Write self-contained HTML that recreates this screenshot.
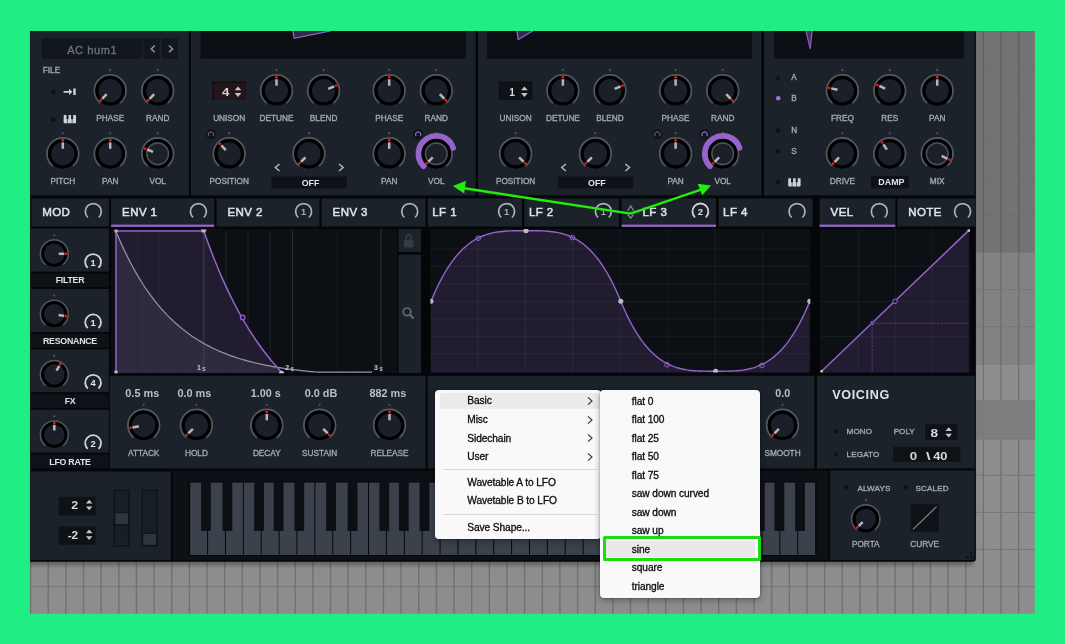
<!DOCTYPE html>
<html><head><meta charset="utf-8"><title>Serum LFO shape menu</title>
<style>
html,body{margin:0;padding:0;background:#1fee83;}
body{width:1065px;height:644px;position:relative;overflow:hidden;font-family:"Liberation Sans",sans-serif;}
svg.main{position:absolute;left:0;top:0;will-change:transform;}
svg.main text{font-family:"Liberation Sans",sans-serif;}
.menu{position:absolute;background:#f9f9f9;border-radius:4px;box-shadow:0 2px 6px rgba(0,0,0,.35),0 0 0 0.5px rgba(0,0,0,.18);box-sizing:border-box;}
.hl{position:absolute;background:#ebebeb;border-radius:2px;}
.mi{position:absolute;font-size:10.2px;line-height:16px;height:16px;color:#0c0c0c;white-space:nowrap;letter-spacing:-0.1px;margin-top:0.4px;-webkit-text-stroke:0.3px #0c0c0c;}
.ar{position:absolute;}
.sep{position:absolute;height:1px;background:#d9d9d9;}
.sine{position:absolute;box-sizing:border-box;border:3px solid #1bdc14;border-radius:1.6px;}
</style></head><body>
<svg class="main" width="1065" height="644" viewBox="0 0 1065 644">
<defs><filter id="bl" x="-5%" y="-5%" width="110%" height="110%"><feGaussianBlur stdDeviation="2"/></filter></defs>
<rect x="0.00" y="0.00" width="1065.00" height="644.00" fill="#1fee83" />
<rect x="30.30" y="31.00" width="1004.50" height="582.70" fill="#8d8d8d" />
<rect x="30.30" y="31.00" width="1004.50" height="221.00" fill="#737373" />
<rect x="30.30" y="252.00" width="1004.50" height="110.80" fill="#828282" />
<rect x="30.30" y="362.80" width="1004.50" height="37.20" fill="#8d8d8d" />
<line x1="983.40" y1="31" x2="983.40" y2="252" stroke="#5f5f5f" stroke-width="1.3"/>
<line x1="983.40" y1="252" x2="983.40" y2="362.8" stroke="#6b6b6b" stroke-width="1.3"/>
<line x1="983.40" y1="362.8" x2="983.40" y2="613.7" stroke="#717171" stroke-width="1.4"/>
<line x1="965.75" y1="31" x2="965.75" y2="252" stroke="#5f5f5f" stroke-width="1.3"/>
<line x1="965.75" y1="252" x2="965.75" y2="362.8" stroke="#6b6b6b" stroke-width="1.3"/>
<line x1="965.75" y1="362.8" x2="965.75" y2="613.7" stroke="#717171" stroke-width="1.4"/>
<line x1="948.11" y1="31" x2="948.11" y2="252" stroke="#5f5f5f" stroke-width="1.3"/>
<line x1="948.11" y1="252" x2="948.11" y2="362.8" stroke="#6b6b6b" stroke-width="1.3"/>
<line x1="948.11" y1="362.8" x2="948.11" y2="613.7" stroke="#717171" stroke-width="1.4"/>
<line x1="930.47" y1="31" x2="930.47" y2="252" stroke="#5f5f5f" stroke-width="1.3"/>
<line x1="930.47" y1="252" x2="930.47" y2="362.8" stroke="#6b6b6b" stroke-width="1.3"/>
<line x1="930.47" y1="362.8" x2="930.47" y2="613.7" stroke="#717171" stroke-width="1.4"/>
<line x1="912.82" y1="31" x2="912.82" y2="252" stroke="#5f5f5f" stroke-width="1.3"/>
<line x1="912.82" y1="252" x2="912.82" y2="362.8" stroke="#6b6b6b" stroke-width="1.3"/>
<line x1="912.82" y1="362.8" x2="912.82" y2="613.7" stroke="#717171" stroke-width="1.4"/>
<line x1="895.18" y1="31" x2="895.18" y2="252" stroke="#5f5f5f" stroke-width="1.3"/>
<line x1="895.18" y1="252" x2="895.18" y2="362.8" stroke="#6b6b6b" stroke-width="1.3"/>
<line x1="895.18" y1="362.8" x2="895.18" y2="613.7" stroke="#717171" stroke-width="1.4"/>
<line x1="877.53" y1="31" x2="877.53" y2="252" stroke="#5f5f5f" stroke-width="1.3"/>
<line x1="877.53" y1="252" x2="877.53" y2="362.8" stroke="#6b6b6b" stroke-width="1.3"/>
<line x1="877.53" y1="362.8" x2="877.53" y2="613.7" stroke="#717171" stroke-width="1.4"/>
<line x1="859.89" y1="31" x2="859.89" y2="252" stroke="#5f5f5f" stroke-width="1.3"/>
<line x1="859.89" y1="252" x2="859.89" y2="362.8" stroke="#6b6b6b" stroke-width="1.3"/>
<line x1="859.89" y1="362.8" x2="859.89" y2="613.7" stroke="#717171" stroke-width="1.4"/>
<line x1="842.24" y1="31" x2="842.24" y2="252" stroke="#5f5f5f" stroke-width="1.3"/>
<line x1="842.24" y1="252" x2="842.24" y2="362.8" stroke="#6b6b6b" stroke-width="1.3"/>
<line x1="842.24" y1="362.8" x2="842.24" y2="613.7" stroke="#717171" stroke-width="1.4"/>
<line x1="824.60" y1="31" x2="824.60" y2="252" stroke="#5f5f5f" stroke-width="1.3"/>
<line x1="824.60" y1="252" x2="824.60" y2="362.8" stroke="#6b6b6b" stroke-width="1.3"/>
<line x1="824.60" y1="362.8" x2="824.60" y2="613.7" stroke="#717171" stroke-width="1.4"/>
<line x1="806.95" y1="31" x2="806.95" y2="252" stroke="#5f5f5f" stroke-width="1.3"/>
<line x1="806.95" y1="252" x2="806.95" y2="362.8" stroke="#6b6b6b" stroke-width="1.3"/>
<line x1="806.95" y1="362.8" x2="806.95" y2="613.7" stroke="#717171" stroke-width="1.4"/>
<line x1="789.31" y1="31" x2="789.31" y2="252" stroke="#5f5f5f" stroke-width="1.3"/>
<line x1="789.31" y1="252" x2="789.31" y2="362.8" stroke="#6b6b6b" stroke-width="1.3"/>
<line x1="789.31" y1="362.8" x2="789.31" y2="613.7" stroke="#717171" stroke-width="1.4"/>
<line x1="771.66" y1="31" x2="771.66" y2="252" stroke="#5f5f5f" stroke-width="1.3"/>
<line x1="771.66" y1="252" x2="771.66" y2="362.8" stroke="#6b6b6b" stroke-width="1.3"/>
<line x1="771.66" y1="362.8" x2="771.66" y2="613.7" stroke="#717171" stroke-width="1.4"/>
<line x1="754.02" y1="31" x2="754.02" y2="252" stroke="#5f5f5f" stroke-width="1.3"/>
<line x1="754.02" y1="252" x2="754.02" y2="362.8" stroke="#6b6b6b" stroke-width="1.3"/>
<line x1="754.02" y1="362.8" x2="754.02" y2="613.7" stroke="#717171" stroke-width="1.4"/>
<line x1="736.37" y1="31" x2="736.37" y2="252" stroke="#5f5f5f" stroke-width="1.3"/>
<line x1="736.37" y1="252" x2="736.37" y2="362.8" stroke="#6b6b6b" stroke-width="1.3"/>
<line x1="736.37" y1="362.8" x2="736.37" y2="613.7" stroke="#717171" stroke-width="1.4"/>
<line x1="718.73" y1="31" x2="718.73" y2="252" stroke="#5f5f5f" stroke-width="1.3"/>
<line x1="718.73" y1="252" x2="718.73" y2="362.8" stroke="#6b6b6b" stroke-width="1.3"/>
<line x1="718.73" y1="362.8" x2="718.73" y2="613.7" stroke="#717171" stroke-width="1.4"/>
<line x1="701.08" y1="31" x2="701.08" y2="252" stroke="#5f5f5f" stroke-width="1.3"/>
<line x1="701.08" y1="252" x2="701.08" y2="362.8" stroke="#6b6b6b" stroke-width="1.3"/>
<line x1="701.08" y1="362.8" x2="701.08" y2="613.7" stroke="#717171" stroke-width="1.4"/>
<line x1="683.44" y1="31" x2="683.44" y2="252" stroke="#5f5f5f" stroke-width="1.3"/>
<line x1="683.44" y1="252" x2="683.44" y2="362.8" stroke="#6b6b6b" stroke-width="1.3"/>
<line x1="683.44" y1="362.8" x2="683.44" y2="613.7" stroke="#717171" stroke-width="1.4"/>
<line x1="665.79" y1="31" x2="665.79" y2="252" stroke="#5f5f5f" stroke-width="1.3"/>
<line x1="665.79" y1="252" x2="665.79" y2="362.8" stroke="#6b6b6b" stroke-width="1.3"/>
<line x1="665.79" y1="362.8" x2="665.79" y2="613.7" stroke="#717171" stroke-width="1.4"/>
<line x1="648.15" y1="31" x2="648.15" y2="252" stroke="#5f5f5f" stroke-width="1.3"/>
<line x1="648.15" y1="252" x2="648.15" y2="362.8" stroke="#6b6b6b" stroke-width="1.3"/>
<line x1="648.15" y1="362.8" x2="648.15" y2="613.7" stroke="#717171" stroke-width="1.4"/>
<line x1="630.50" y1="31" x2="630.50" y2="252" stroke="#5f5f5f" stroke-width="1.3"/>
<line x1="630.50" y1="252" x2="630.50" y2="362.8" stroke="#6b6b6b" stroke-width="1.3"/>
<line x1="630.50" y1="362.8" x2="630.50" y2="613.7" stroke="#717171" stroke-width="1.4"/>
<line x1="612.86" y1="31" x2="612.86" y2="252" stroke="#5f5f5f" stroke-width="1.3"/>
<line x1="612.86" y1="252" x2="612.86" y2="362.8" stroke="#6b6b6b" stroke-width="1.3"/>
<line x1="612.86" y1="362.8" x2="612.86" y2="613.7" stroke="#717171" stroke-width="1.4"/>
<line x1="595.21" y1="31" x2="595.21" y2="252" stroke="#5f5f5f" stroke-width="1.3"/>
<line x1="595.21" y1="252" x2="595.21" y2="362.8" stroke="#6b6b6b" stroke-width="1.3"/>
<line x1="595.21" y1="362.8" x2="595.21" y2="613.7" stroke="#717171" stroke-width="1.4"/>
<line x1="577.57" y1="31" x2="577.57" y2="252" stroke="#5f5f5f" stroke-width="1.3"/>
<line x1="577.57" y1="252" x2="577.57" y2="362.8" stroke="#6b6b6b" stroke-width="1.3"/>
<line x1="577.57" y1="362.8" x2="577.57" y2="613.7" stroke="#717171" stroke-width="1.4"/>
<line x1="559.92" y1="31" x2="559.92" y2="252" stroke="#5f5f5f" stroke-width="1.3"/>
<line x1="559.92" y1="252" x2="559.92" y2="362.8" stroke="#6b6b6b" stroke-width="1.3"/>
<line x1="559.92" y1="362.8" x2="559.92" y2="613.7" stroke="#717171" stroke-width="1.4"/>
<line x1="542.28" y1="31" x2="542.28" y2="252" stroke="#5f5f5f" stroke-width="1.3"/>
<line x1="542.28" y1="252" x2="542.28" y2="362.8" stroke="#6b6b6b" stroke-width="1.3"/>
<line x1="542.28" y1="362.8" x2="542.28" y2="613.7" stroke="#717171" stroke-width="1.4"/>
<line x1="524.63" y1="31" x2="524.63" y2="252" stroke="#5f5f5f" stroke-width="1.3"/>
<line x1="524.63" y1="252" x2="524.63" y2="362.8" stroke="#6b6b6b" stroke-width="1.3"/>
<line x1="524.63" y1="362.8" x2="524.63" y2="613.7" stroke="#717171" stroke-width="1.4"/>
<line x1="506.99" y1="31" x2="506.99" y2="252" stroke="#5f5f5f" stroke-width="1.3"/>
<line x1="506.99" y1="252" x2="506.99" y2="362.8" stroke="#6b6b6b" stroke-width="1.3"/>
<line x1="506.99" y1="362.8" x2="506.99" y2="613.7" stroke="#717171" stroke-width="1.4"/>
<line x1="489.34" y1="31" x2="489.34" y2="252" stroke="#5f5f5f" stroke-width="1.3"/>
<line x1="489.34" y1="252" x2="489.34" y2="362.8" stroke="#6b6b6b" stroke-width="1.3"/>
<line x1="489.34" y1="362.8" x2="489.34" y2="613.7" stroke="#717171" stroke-width="1.4"/>
<line x1="471.70" y1="31" x2="471.70" y2="252" stroke="#5f5f5f" stroke-width="1.3"/>
<line x1="471.70" y1="252" x2="471.70" y2="362.8" stroke="#6b6b6b" stroke-width="1.3"/>
<line x1="471.70" y1="362.8" x2="471.70" y2="613.7" stroke="#717171" stroke-width="1.4"/>
<line x1="454.05" y1="31" x2="454.05" y2="252" stroke="#5f5f5f" stroke-width="1.3"/>
<line x1="454.05" y1="252" x2="454.05" y2="362.8" stroke="#6b6b6b" stroke-width="1.3"/>
<line x1="454.05" y1="362.8" x2="454.05" y2="613.7" stroke="#717171" stroke-width="1.4"/>
<line x1="436.41" y1="31" x2="436.41" y2="252" stroke="#5f5f5f" stroke-width="1.3"/>
<line x1="436.41" y1="252" x2="436.41" y2="362.8" stroke="#6b6b6b" stroke-width="1.3"/>
<line x1="436.41" y1="362.8" x2="436.41" y2="613.7" stroke="#717171" stroke-width="1.4"/>
<line x1="418.76" y1="31" x2="418.76" y2="252" stroke="#5f5f5f" stroke-width="1.3"/>
<line x1="418.76" y1="252" x2="418.76" y2="362.8" stroke="#6b6b6b" stroke-width="1.3"/>
<line x1="418.76" y1="362.8" x2="418.76" y2="613.7" stroke="#717171" stroke-width="1.4"/>
<line x1="401.12" y1="31" x2="401.12" y2="252" stroke="#5f5f5f" stroke-width="1.3"/>
<line x1="401.12" y1="252" x2="401.12" y2="362.8" stroke="#6b6b6b" stroke-width="1.3"/>
<line x1="401.12" y1="362.8" x2="401.12" y2="613.7" stroke="#717171" stroke-width="1.4"/>
<line x1="383.47" y1="31" x2="383.47" y2="252" stroke="#5f5f5f" stroke-width="1.3"/>
<line x1="383.47" y1="252" x2="383.47" y2="362.8" stroke="#6b6b6b" stroke-width="1.3"/>
<line x1="383.47" y1="362.8" x2="383.47" y2="613.7" stroke="#717171" stroke-width="1.4"/>
<line x1="365.83" y1="31" x2="365.83" y2="252" stroke="#5f5f5f" stroke-width="1.3"/>
<line x1="365.83" y1="252" x2="365.83" y2="362.8" stroke="#6b6b6b" stroke-width="1.3"/>
<line x1="365.83" y1="362.8" x2="365.83" y2="613.7" stroke="#717171" stroke-width="1.4"/>
<line x1="348.18" y1="31" x2="348.18" y2="252" stroke="#5f5f5f" stroke-width="1.3"/>
<line x1="348.18" y1="252" x2="348.18" y2="362.8" stroke="#6b6b6b" stroke-width="1.3"/>
<line x1="348.18" y1="362.8" x2="348.18" y2="613.7" stroke="#717171" stroke-width="1.4"/>
<line x1="330.54" y1="31" x2="330.54" y2="252" stroke="#5f5f5f" stroke-width="1.3"/>
<line x1="330.54" y1="252" x2="330.54" y2="362.8" stroke="#6b6b6b" stroke-width="1.3"/>
<line x1="330.54" y1="362.8" x2="330.54" y2="613.7" stroke="#717171" stroke-width="1.4"/>
<line x1="312.89" y1="31" x2="312.89" y2="252" stroke="#5f5f5f" stroke-width="1.3"/>
<line x1="312.89" y1="252" x2="312.89" y2="362.8" stroke="#6b6b6b" stroke-width="1.3"/>
<line x1="312.89" y1="362.8" x2="312.89" y2="613.7" stroke="#717171" stroke-width="1.4"/>
<line x1="295.25" y1="31" x2="295.25" y2="252" stroke="#5f5f5f" stroke-width="1.3"/>
<line x1="295.25" y1="252" x2="295.25" y2="362.8" stroke="#6b6b6b" stroke-width="1.3"/>
<line x1="295.25" y1="362.8" x2="295.25" y2="613.7" stroke="#717171" stroke-width="1.4"/>
<line x1="277.60" y1="31" x2="277.60" y2="252" stroke="#5f5f5f" stroke-width="1.3"/>
<line x1="277.60" y1="252" x2="277.60" y2="362.8" stroke="#6b6b6b" stroke-width="1.3"/>
<line x1="277.60" y1="362.8" x2="277.60" y2="613.7" stroke="#717171" stroke-width="1.4"/>
<line x1="259.96" y1="31" x2="259.96" y2="252" stroke="#5f5f5f" stroke-width="1.3"/>
<line x1="259.96" y1="252" x2="259.96" y2="362.8" stroke="#6b6b6b" stroke-width="1.3"/>
<line x1="259.96" y1="362.8" x2="259.96" y2="613.7" stroke="#717171" stroke-width="1.4"/>
<line x1="242.31" y1="31" x2="242.31" y2="252" stroke="#5f5f5f" stroke-width="1.3"/>
<line x1="242.31" y1="252" x2="242.31" y2="362.8" stroke="#6b6b6b" stroke-width="1.3"/>
<line x1="242.31" y1="362.8" x2="242.31" y2="613.7" stroke="#717171" stroke-width="1.4"/>
<line x1="224.67" y1="31" x2="224.67" y2="252" stroke="#5f5f5f" stroke-width="1.3"/>
<line x1="224.67" y1="252" x2="224.67" y2="362.8" stroke="#6b6b6b" stroke-width="1.3"/>
<line x1="224.67" y1="362.8" x2="224.67" y2="613.7" stroke="#717171" stroke-width="1.4"/>
<line x1="207.02" y1="31" x2="207.02" y2="252" stroke="#5f5f5f" stroke-width="1.3"/>
<line x1="207.02" y1="252" x2="207.02" y2="362.8" stroke="#6b6b6b" stroke-width="1.3"/>
<line x1="207.02" y1="362.8" x2="207.02" y2="613.7" stroke="#717171" stroke-width="1.4"/>
<line x1="189.38" y1="31" x2="189.38" y2="252" stroke="#5f5f5f" stroke-width="1.3"/>
<line x1="189.38" y1="252" x2="189.38" y2="362.8" stroke="#6b6b6b" stroke-width="1.3"/>
<line x1="189.38" y1="362.8" x2="189.38" y2="613.7" stroke="#717171" stroke-width="1.4"/>
<line x1="171.73" y1="31" x2="171.73" y2="252" stroke="#5f5f5f" stroke-width="1.3"/>
<line x1="171.73" y1="252" x2="171.73" y2="362.8" stroke="#6b6b6b" stroke-width="1.3"/>
<line x1="171.73" y1="362.8" x2="171.73" y2="613.7" stroke="#717171" stroke-width="1.4"/>
<line x1="154.09" y1="31" x2="154.09" y2="252" stroke="#5f5f5f" stroke-width="1.3"/>
<line x1="154.09" y1="252" x2="154.09" y2="362.8" stroke="#6b6b6b" stroke-width="1.3"/>
<line x1="154.09" y1="362.8" x2="154.09" y2="613.7" stroke="#717171" stroke-width="1.4"/>
<line x1="136.44" y1="31" x2="136.44" y2="252" stroke="#5f5f5f" stroke-width="1.3"/>
<line x1="136.44" y1="252" x2="136.44" y2="362.8" stroke="#6b6b6b" stroke-width="1.3"/>
<line x1="136.44" y1="362.8" x2="136.44" y2="613.7" stroke="#717171" stroke-width="1.4"/>
<line x1="118.80" y1="31" x2="118.80" y2="252" stroke="#5f5f5f" stroke-width="1.3"/>
<line x1="118.80" y1="252" x2="118.80" y2="362.8" stroke="#6b6b6b" stroke-width="1.3"/>
<line x1="118.80" y1="362.8" x2="118.80" y2="613.7" stroke="#717171" stroke-width="1.4"/>
<line x1="101.15" y1="31" x2="101.15" y2="252" stroke="#5f5f5f" stroke-width="1.3"/>
<line x1="101.15" y1="252" x2="101.15" y2="362.8" stroke="#6b6b6b" stroke-width="1.3"/>
<line x1="101.15" y1="362.8" x2="101.15" y2="613.7" stroke="#717171" stroke-width="1.4"/>
<line x1="83.51" y1="31" x2="83.51" y2="252" stroke="#5f5f5f" stroke-width="1.3"/>
<line x1="83.51" y1="252" x2="83.51" y2="362.8" stroke="#6b6b6b" stroke-width="1.3"/>
<line x1="83.51" y1="362.8" x2="83.51" y2="613.7" stroke="#717171" stroke-width="1.4"/>
<line x1="65.86" y1="31" x2="65.86" y2="252" stroke="#5f5f5f" stroke-width="1.3"/>
<line x1="65.86" y1="252" x2="65.86" y2="362.8" stroke="#6b6b6b" stroke-width="1.3"/>
<line x1="65.86" y1="362.8" x2="65.86" y2="613.7" stroke="#717171" stroke-width="1.4"/>
<line x1="48.22" y1="31" x2="48.22" y2="252" stroke="#5f5f5f" stroke-width="1.3"/>
<line x1="48.22" y1="252" x2="48.22" y2="362.8" stroke="#6b6b6b" stroke-width="1.3"/>
<line x1="48.22" y1="362.8" x2="48.22" y2="613.7" stroke="#717171" stroke-width="1.4"/>
<line x1="30.57" y1="31" x2="30.57" y2="252" stroke="#5f5f5f" stroke-width="1.3"/>
<line x1="30.57" y1="252" x2="30.57" y2="362.8" stroke="#6b6b6b" stroke-width="1.3"/>
<line x1="30.57" y1="362.8" x2="30.57" y2="613.7" stroke="#717171" stroke-width="1.4"/>
<line x1="1001.04" y1="31" x2="1001.04" y2="252" stroke="#5f5f5f" stroke-width="1.3"/>
<line x1="1001.04" y1="252" x2="1001.04" y2="362.8" stroke="#6b6b6b" stroke-width="1.3"/>
<line x1="1001.04" y1="362.8" x2="1001.04" y2="613.7" stroke="#717171" stroke-width="1.4"/>
<line x1="1018.69" y1="31" x2="1018.69" y2="252" stroke="#5f5f5f" stroke-width="1.3"/>
<line x1="1018.69" y1="252" x2="1018.69" y2="362.8" stroke="#6b6b6b" stroke-width="1.3"/>
<line x1="1018.69" y1="362.8" x2="1018.69" y2="613.7" stroke="#717171" stroke-width="1.4"/>
<line x1="30.3" y1="66.60" x2="1034.8" y2="66.60" stroke="#6b6b6b" stroke-width="1" stroke-dasharray="1.5 1.5"/>
<line x1="30.3" y1="103.75" x2="1034.8" y2="103.75" stroke="#6b6b6b" stroke-width="1" stroke-dasharray="1.5 1.5"/>
<line x1="30.3" y1="140.90" x2="1034.8" y2="140.90" stroke="#6b6b6b" stroke-width="1" stroke-dasharray="1.5 1.5"/>
<line x1="30.3" y1="178.05" x2="1034.8" y2="178.05" stroke="#6b6b6b" stroke-width="1" stroke-dasharray="1.5 1.5"/>
<line x1="30.3" y1="215.20" x2="1034.8" y2="215.20" stroke="#6b6b6b" stroke-width="1" stroke-dasharray="1.5 1.5"/>
<line x1="30.3" y1="252.35" x2="1034.8" y2="252.35" stroke="#767676" stroke-width="1" />
<line x1="30.3" y1="289.50" x2="1034.8" y2="289.50" stroke="#767676" stroke-width="1" />
<line x1="30.3" y1="326.65" x2="1034.8" y2="326.65" stroke="#767676" stroke-width="1" />
<line x1="30.3" y1="363.80" x2="1034.8" y2="363.80" stroke="#767676" stroke-width="1" />
<line x1="30.3" y1="400.95" x2="1034.8" y2="400.95" stroke="#767676" stroke-width="1" />
<line x1="30.3" y1="438.10" x2="1034.8" y2="438.10" stroke="#767676" stroke-width="1" />
<line x1="30.3" y1="475.25" x2="1034.8" y2="475.25" stroke="#767676" stroke-width="1" />
<line x1="30.3" y1="512.40" x2="1034.8" y2="512.40" stroke="#767676" stroke-width="1" />
<line x1="30.3" y1="549.55" x2="1034.8" y2="549.55" stroke="#767676" stroke-width="1" />
<line x1="30.3" y1="586.70" x2="1034.8" y2="586.70" stroke="#767676" stroke-width="1" />
<pattern id="dots" width="2" height="2" patternUnits="userSpaceOnUse"><rect width="2" height="2" fill="#7c7c7c"/><rect width="1" height="1" fill="#868686"/></pattern>
<rect x="30.30" y="400.00" width="1004.50" height="39.60" fill="#7c7c7c" />
<rect x="983.40" y="402.00" width="49.90" height="36.00" fill="url(#dots)" />
<clipPath id="gc"><rect x="30.3" y="31" width="1004.5" height="582.7"/></clipPath>
<g clip-path="url(#gc)"><rect x="24.3" y="33" width="949.1" height="532.3" fill="#000" opacity="0.3" filter="url(#bl)"/></g>
<path d="M30.3,31H975.9V558.5999999999999a3.2,3.2 0 0 1 -3.2,3.2H30.3Z" fill="#040608"/>
<rect x="30.60" y="31.00" width="158.30" height="164.40" fill="#1c222a" />
<rect x="190.90" y="31.00" width="284.70" height="164.40" fill="#1c222a" />
<rect x="478.00" y="31.00" width="283.50" height="164.40" fill="#1c222a" />
<rect x="764.00" y="31.00" width="210.80" height="164.40" fill="#1c222a" />
<rect x="41.80" y="38.00" width="100.40" height="21.00" fill="#12171e" />
<text x="92.20" y="53.54" font-size="11" fill="#6f757d" text-anchor="middle" font-weight="normal"  stroke="#6f757d" stroke-width="0.3" letter-spacing="0.6">AC hum1</text>
<rect x="143.60" y="38.00" width="16.10" height="21.00" fill="#12171e" />
<rect x="161.50" y="38.00" width="16.30" height="21.00" fill="#12171e" />
<path d="M154.80,45.5L151.20,48.9L154.80,52.3" fill="none" stroke="#8d939a" stroke-width="1.5"/>
<path d="M169.00,45.5L172.60,48.9L169.00,52.3" fill="none" stroke="#8d939a" stroke-width="1.5"/>
<text x="42.80" y="72.64" font-size="8.2" fill="#a4a9b0" text-anchor="start" font-weight="normal" stroke="#a4a9b0" stroke-width="0.33" >FILE</text>
<circle cx="53.4" cy="91.9" r="2.3" fill="#0e1216"/>
<circle cx="53.4" cy="119.8" r="2.3" fill="#0e1216"/>
<path d="M63.6,90.9h5.4v-2.2l3.4,3.1l-3.4,3.1v-2.2h-5.4z M73.3,88.6h2.4v6.4h-2.4z" fill="#d0d4d9"/>
<rect x="63.65" y="115.00" width="12.4" height="8.2" rx="0.8" fill="#d0d4d9"/>
<rect x="66.45" y="114.80" width="2.1" height="4.3" fill="#1c222a"/>
<rect x="67.20" y="119.00" width="0.6" height="4.4" fill="#1c222a"/>
<rect x="71.05" y="114.80" width="2.1" height="4.3" fill="#1c222a"/>
<rect x="71.80" y="119.00" width="0.6" height="4.4" fill="#1c222a"/>
<circle cx="110.2" cy="70.10" r="1.05" fill="#525860"/>
<path d="M100.29,102.94A15.75,15.75 0 1 1 120.11,102.94" fill="none" stroke="#525860" stroke-width="1.90"/>
<circle cx="110.2" cy="90.7" r="13.25" fill="#1b2028" stroke="#000" stroke-width="3.30"/>
<line x1="106.66" y1="94.24" x2="102.14" y2="98.76" stroke="#b4b8be" stroke-width="2.5"/>
<circle cx="100.65" cy="100.25" r="1.4" fill="#f01418"/>
<circle cx="157.7" cy="70.10" r="1.05" fill="#525860"/>
<path d="M147.79,102.94A15.75,15.75 0 1 1 167.61,102.94" fill="none" stroke="#525860" stroke-width="1.90"/>
<circle cx="157.7" cy="90.7" r="13.25" fill="#1b2028" stroke="#000" stroke-width="3.30"/>
<line x1="154.16" y1="94.24" x2="149.64" y2="98.76" stroke="#b4b8be" stroke-width="2.5"/>
<circle cx="148.15" cy="100.25" r="1.4" fill="#f01418"/>
<text x="110.20" y="121.15" font-size="8.25" fill="#a4a9b0" text-anchor="middle" font-weight="normal" stroke="#a4a9b0" stroke-width="0.33" >PHASE</text>
<text x="157.70" y="121.15" font-size="8.25" fill="#a4a9b0" text-anchor="middle" font-weight="normal" stroke="#a4a9b0" stroke-width="0.33" >RAND</text>
<circle cx="62.8" cy="133.20" r="1.05" fill="#525860"/>
<path d="M52.89,166.04A15.75,15.75 0 1 1 72.71,166.04" fill="none" stroke="#525860" stroke-width="1.90"/>
<circle cx="62.8" cy="153.8" r="13.25" fill="#1b2028" stroke="#000" stroke-width="3.30"/>
<line x1="62.80" y1="148.80" x2="62.80" y2="142.40" stroke="#b4b8be" stroke-width="2.5"/>
<circle cx="62.80" cy="140.30" r="1.4" fill="#f01418"/>
<circle cx="110.2" cy="133.20" r="1.05" fill="#525860"/>
<path d="M100.29,166.04A15.75,15.75 0 1 1 120.11,166.04" fill="none" stroke="#525860" stroke-width="1.90"/>
<circle cx="110.2" cy="153.8" r="13.25" fill="#1b2028" stroke="#000" stroke-width="3.30"/>
<line x1="110.20" y1="148.80" x2="110.20" y2="142.40" stroke="#b4b8be" stroke-width="2.5"/>
<circle cx="110.20" cy="140.30" r="1.4" fill="#f01418"/>
<circle cx="157.7" cy="133.20" r="1.05" fill="#525860"/>
<path d="M147.79,166.04A15.75,15.75 0 1 1 167.61,166.04" fill="none" stroke="#525860" stroke-width="1.90"/>
<circle cx="157.7" cy="153.8" r="13.25" fill="#1b2028" stroke="#000" stroke-width="3.30"/>
<circle cx="157.7" cy="153.8" r="10.80" fill="none" stroke="#4c525a" stroke-width="1.4"/>
<line x1="153.06" y1="151.93" x2="147.13" y2="149.53" stroke="#b4b8be" stroke-width="2.5"/>
<circle cx="145.18" cy="148.74" r="1.4" fill="#f01418"/>
<text x="62.80" y="184.45" font-size="8.25" fill="#a4a9b0" text-anchor="middle" font-weight="normal" stroke="#a4a9b0" stroke-width="0.33" >PITCH</text>
<text x="110.20" y="184.45" font-size="8.25" fill="#a4a9b0" text-anchor="middle" font-weight="normal" stroke="#a4a9b0" stroke-width="0.33" >PAN</text>
<text x="157.70" y="184.45" font-size="8.25" fill="#a4a9b0" text-anchor="middle" font-weight="normal" stroke="#a4a9b0" stroke-width="0.33" >VOL</text>
<rect x="200.50" y="31.00" width="265.30" height="27.80" fill="#0c1014" />
<rect x="212.30" y="81.50" width="33.50" height="18.40" fill="#0a0d11" />
<rect x="213.60" y="82.60" width="32.20" height="17.30" fill="#24151a" />
<text x="222.10" y="95.85" font-size="11.3" fill="#d6d2d2" font-weight="bold" textLength="7.4" lengthAdjust="spacingAndGlyphs">4</text>
<path d="M234.7,90.2L238,86.5L241.3,90.2Z M234.7,93.10000000000001L238,96.9L241.3,93.10000000000001Z" fill="#c4c8cd"/>
<text x="229.20" y="121.15" font-size="8.25" fill="#a4a9b0" text-anchor="middle" font-weight="normal" stroke="#a4a9b0" stroke-width="0.33" >UNISON</text>
<circle cx="276.5" cy="70.10" r="1.05" fill="#525860"/>
<path d="M266.59,102.94A15.75,15.75 0 1 1 286.41,102.94" fill="none" stroke="#525860" stroke-width="1.90"/>
<circle cx="276.5" cy="90.7" r="13.25" fill="#1b2028" stroke="#000" stroke-width="3.30"/>
<line x1="276.50" y1="85.70" x2="276.50" y2="79.30" stroke="#b4b8be" stroke-width="2.5"/>
<circle cx="276.50" cy="77.20" r="1.4" fill="#f01418"/>
<text x="276.50" y="121.15" font-size="8.25" fill="#a4a9b0" text-anchor="middle" font-weight="normal" stroke="#a4a9b0" stroke-width="0.33" >DETUNE</text>
<circle cx="323.6" cy="70.10" r="1.05" fill="#525860"/>
<path d="M313.69,102.94A15.75,15.75 0 1 1 333.51,102.94" fill="none" stroke="#525860" stroke-width="1.90"/>
<circle cx="323.6" cy="90.7" r="13.25" fill="#1b2028" stroke="#000" stroke-width="3.30"/>
<line x1="328.24" y1="88.83" x2="334.17" y2="86.43" stroke="#b4b8be" stroke-width="2.5"/>
<circle cx="336.12" cy="85.64" r="1.4" fill="#f01418"/>
<text x="323.60" y="121.15" font-size="8.25" fill="#a4a9b0" text-anchor="middle" font-weight="normal" stroke="#a4a9b0" stroke-width="0.33" >BLEND</text>
<circle cx="389.2" cy="70.10" r="1.05" fill="#525860"/>
<path d="M379.29,102.94A15.75,15.75 0 1 1 399.11,102.94" fill="none" stroke="#525860" stroke-width="1.90"/>
<circle cx="389.2" cy="90.7" r="13.25" fill="#1b2028" stroke="#000" stroke-width="3.30"/>
<line x1="389.20" y1="85.70" x2="389.20" y2="79.30" stroke="#b4b8be" stroke-width="2.5"/>
<circle cx="389.20" cy="77.20" r="1.4" fill="#f01418"/>
<text x="389.20" y="121.15" font-size="8.25" fill="#a4a9b0" text-anchor="middle" font-weight="normal" stroke="#a4a9b0" stroke-width="0.33" >PHASE</text>
<circle cx="436.3" cy="70.10" r="1.05" fill="#525860"/>
<path d="M426.39,102.94A15.75,15.75 0 1 1 446.21,102.94" fill="none" stroke="#525860" stroke-width="1.90"/>
<circle cx="436.3" cy="90.7" r="13.25" fill="#1b2028" stroke="#000" stroke-width="3.30"/>
<line x1="439.84" y1="94.24" x2="444.36" y2="98.76" stroke="#b4b8be" stroke-width="2.5"/>
<circle cx="445.85" cy="100.25" r="1.4" fill="#f01418"/>
<text x="436.30" y="121.15" font-size="8.25" fill="#a4a9b0" text-anchor="middle" font-weight="normal" stroke="#a4a9b0" stroke-width="0.33" >RAND</text>
<circle cx="229.2" cy="133.15" r="1.05" fill="#525860"/>
<path d="M219.29,165.99A15.75,15.75 0 1 1 239.11,165.99" fill="none" stroke="#525860" stroke-width="1.90"/>
<circle cx="229.2" cy="153.75" r="13.25" fill="#1b2028" stroke="#000" stroke-width="3.30"/>
<line x1="225.79" y1="150.09" x2="221.43" y2="145.41" stroke="#b4b8be" stroke-width="2.5"/>
<circle cx="219.99" cy="143.88" r="1.4" fill="#f01418"/>
<text x="229.20" y="184.45" font-size="8.25" fill="#a4a9b0" text-anchor="middle" font-weight="normal" stroke="#a4a9b0" stroke-width="0.33" >POSITION</text>
<circle cx="309" cy="133.15" r="1.05" fill="#525860"/>
<path d="M299.09,165.99A15.75,15.75 0 1 1 318.91,165.99" fill="none" stroke="#525860" stroke-width="1.90"/>
<circle cx="309" cy="153.75" r="13.25" fill="#1b2028" stroke="#000" stroke-width="3.30"/>
<line x1="305.46" y1="157.29" x2="300.94" y2="161.81" stroke="#b4b8be" stroke-width="2.5"/>
<circle cx="299.45" cy="163.30" r="1.4" fill="#f01418"/>
<path d="M279.50,164.1L275.30,167.6L279.50,171.1" fill="none" stroke="#b9bec4" stroke-width="1.35"/>
<path d="M339.00,164.1L343.20,167.6L339.00,171.1" fill="none" stroke="#b9bec4" stroke-width="1.35"/>
<rect x="271.50" y="176.50" width="75.50" height="11.90" fill="#0e1217" />
<text x="310.50" y="185.69" font-size="8.9" fill="#dfe3e8" text-anchor="middle" font-weight="bold"  >OFF</text>
<circle cx="389.2" cy="133.15" r="1.05" fill="#525860"/>
<path d="M379.29,165.99A15.75,15.75 0 1 1 399.11,165.99" fill="none" stroke="#525860" stroke-width="1.90"/>
<circle cx="389.2" cy="153.75" r="13.25" fill="#1b2028" stroke="#000" stroke-width="3.30"/>
<line x1="389.20" y1="148.75" x2="389.20" y2="142.35" stroke="#b4b8be" stroke-width="2.5"/>
<circle cx="389.20" cy="140.25" r="1.4" fill="#f01418"/>
<text x="389.20" y="184.45" font-size="8.25" fill="#a4a9b0" text-anchor="middle" font-weight="normal" stroke="#a4a9b0" stroke-width="0.33" >PAN</text>
<circle cx="436.3" cy="133.15" r="1.05" fill="#525860"/>
<path d="M426.39,165.99A15.75,15.75 0 1 1 446.21,165.99" fill="none" stroke="#525860" stroke-width="1.90"/>
<path d="M423.50,166.11A17.8,17.8 0 1 1 453.03,147.66" fill="none" stroke="#9563c9" stroke-width="5.90" stroke-linecap="round"/>
<circle cx="436.3" cy="153.75" r="13.25" fill="#1b2028" stroke="#000" stroke-width="3.30"/>
<circle cx="436.3" cy="153.75" r="10.80" fill="none" stroke="#4c525a" stroke-width="1.4"/>
<line x1="432.76" y1="157.29" x2="428.24" y2="161.81" stroke="#b4b8be" stroke-width="2.5"/>
<circle cx="426.75" cy="163.30" r="1.4" fill="#f01418"/>
<text x="436.30" y="184.45" font-size="8.25" fill="#a4a9b0" text-anchor="middle" font-weight="normal" stroke="#a4a9b0" stroke-width="0.33" >VOL</text>
<circle cx="211" cy="134.3" r="5.1" fill="#10141a"/>
<path d="M208.87,136.09A2.6,2.6 0 1 1 213.13,136.09" fill="none" stroke="#555b63" stroke-width="1.2"/>
<circle cx="418.2" cy="134.3" r="5.1" fill="#10141a"/>
<path d="M416.07,136.09A2.6,2.6 0 1 1 420.33,136.09" fill="none" stroke="#9563c9" stroke-width="1.2"/>
<rect x="486.90" y="31.00" width="265.30" height="27.80" fill="#0c1014" />
<rect x="498.70" y="81.50" width="33.50" height="18.40" fill="#0a0d11" />
<rect x="500.00" y="82.60" width="32.20" height="17.30" fill="#0e1217" />
<text x="509.35" y="95.85" font-size="11.3" fill="#d5d9de" font-weight="bold" textLength="5.7" lengthAdjust="spacingAndGlyphs">1</text>
<path d="M521.1,90.2L524.4,86.5L527.6999999999999,90.2Z M521.1,93.10000000000001L524.4,96.9L527.6999999999999,93.10000000000001Z" fill="#c4c8cd"/>
<text x="515.60" y="121.15" font-size="8.25" fill="#a4a9b0" text-anchor="middle" font-weight="normal" stroke="#a4a9b0" stroke-width="0.33" >UNISON</text>
<circle cx="562.9" cy="70.10" r="1.05" fill="#525860"/>
<path d="M552.99,102.94A15.75,15.75 0 1 1 572.81,102.94" fill="none" stroke="#525860" stroke-width="1.90"/>
<circle cx="562.9" cy="90.7" r="13.25" fill="#1b2028" stroke="#000" stroke-width="3.30"/>
<line x1="562.90" y1="85.70" x2="562.90" y2="79.30" stroke="#b4b8be" stroke-width="2.5"/>
<circle cx="562.90" cy="77.20" r="1.4" fill="#f01418"/>
<text x="562.90" y="121.15" font-size="8.25" fill="#a4a9b0" text-anchor="middle" font-weight="normal" stroke="#a4a9b0" stroke-width="0.33" >DETUNE</text>
<circle cx="610.0" cy="70.10" r="1.05" fill="#525860"/>
<path d="M600.09,102.94A15.75,15.75 0 1 1 619.91,102.94" fill="none" stroke="#525860" stroke-width="1.90"/>
<circle cx="610.0" cy="90.7" r="13.25" fill="#1b2028" stroke="#000" stroke-width="3.30"/>
<line x1="614.64" y1="88.83" x2="620.57" y2="86.43" stroke="#b4b8be" stroke-width="2.5"/>
<circle cx="622.52" cy="85.64" r="1.4" fill="#f01418"/>
<text x="610.00" y="121.15" font-size="8.25" fill="#a4a9b0" text-anchor="middle" font-weight="normal" stroke="#a4a9b0" stroke-width="0.33" >BLEND</text>
<circle cx="675.5999999999999" cy="70.10" r="1.05" fill="#525860"/>
<path d="M665.69,102.94A15.75,15.75 0 1 1 685.51,102.94" fill="none" stroke="#525860" stroke-width="1.90"/>
<circle cx="675.5999999999999" cy="90.7" r="13.25" fill="#1b2028" stroke="#000" stroke-width="3.30"/>
<line x1="675.60" y1="85.70" x2="675.60" y2="79.30" stroke="#b4b8be" stroke-width="2.5"/>
<circle cx="675.60" cy="77.20" r="1.4" fill="#f01418"/>
<text x="675.60" y="121.15" font-size="8.25" fill="#a4a9b0" text-anchor="middle" font-weight="normal" stroke="#a4a9b0" stroke-width="0.33" >PHASE</text>
<circle cx="722.7" cy="70.10" r="1.05" fill="#525860"/>
<path d="M712.79,102.94A15.75,15.75 0 1 1 732.61,102.94" fill="none" stroke="#525860" stroke-width="1.90"/>
<circle cx="722.7" cy="90.7" r="13.25" fill="#1b2028" stroke="#000" stroke-width="3.30"/>
<line x1="726.24" y1="94.24" x2="730.76" y2="98.76" stroke="#b4b8be" stroke-width="2.5"/>
<circle cx="732.25" cy="100.25" r="1.4" fill="#f01418"/>
<text x="722.70" y="121.15" font-size="8.25" fill="#a4a9b0" text-anchor="middle" font-weight="normal" stroke="#a4a9b0" stroke-width="0.33" >RAND</text>
<circle cx="515.5999999999999" cy="133.15" r="1.05" fill="#525860"/>
<path d="M505.69,165.99A15.75,15.75 0 1 1 525.51,165.99" fill="none" stroke="#525860" stroke-width="1.90"/>
<circle cx="515.5999999999999" cy="153.75" r="13.25" fill="#1b2028" stroke="#000" stroke-width="3.30"/>
<line x1="519.14" y1="157.29" x2="523.66" y2="161.81" stroke="#b4b8be" stroke-width="2.5"/>
<circle cx="525.15" cy="163.30" r="1.4" fill="#f01418"/>
<text x="515.60" y="184.45" font-size="8.25" fill="#a4a9b0" text-anchor="middle" font-weight="normal" stroke="#a4a9b0" stroke-width="0.33" >POSITION</text>
<circle cx="595.4" cy="133.15" r="1.05" fill="#525860"/>
<path d="M585.49,165.99A15.75,15.75 0 1 1 605.31,165.99" fill="none" stroke="#525860" stroke-width="1.90"/>
<circle cx="595.4" cy="153.75" r="13.25" fill="#1b2028" stroke="#000" stroke-width="3.30"/>
<line x1="591.86" y1="157.29" x2="587.34" y2="161.81" stroke="#b4b8be" stroke-width="2.5"/>
<circle cx="585.85" cy="163.30" r="1.4" fill="#f01418"/>
<path d="M565.90,164.1L561.70,167.6L565.90,171.1" fill="none" stroke="#b9bec4" stroke-width="1.35"/>
<path d="M625.40,164.1L629.60,167.6L625.40,171.1" fill="none" stroke="#b9bec4" stroke-width="1.35"/>
<rect x="557.90" y="176.50" width="75.50" height="11.90" fill="#0e1217" />
<text x="596.90" y="185.69" font-size="8.9" fill="#dfe3e8" text-anchor="middle" font-weight="bold"  >OFF</text>
<circle cx="675.5999999999999" cy="133.15" r="1.05" fill="#525860"/>
<path d="M665.69,165.99A15.75,15.75 0 1 1 685.51,165.99" fill="none" stroke="#525860" stroke-width="1.90"/>
<circle cx="675.5999999999999" cy="153.75" r="13.25" fill="#1b2028" stroke="#000" stroke-width="3.30"/>
<line x1="675.60" y1="148.75" x2="675.60" y2="142.35" stroke="#b4b8be" stroke-width="2.5"/>
<circle cx="675.60" cy="140.25" r="1.4" fill="#f01418"/>
<text x="675.60" y="184.45" font-size="8.25" fill="#a4a9b0" text-anchor="middle" font-weight="normal" stroke="#a4a9b0" stroke-width="0.33" >PAN</text>
<circle cx="722.7" cy="133.15" r="1.05" fill="#525860"/>
<path d="M712.79,165.99A15.75,15.75 0 1 1 732.61,165.99" fill="none" stroke="#525860" stroke-width="1.90"/>
<path d="M709.90,166.11A17.8,17.8 0 1 1 739.43,147.66" fill="none" stroke="#9563c9" stroke-width="5.90" stroke-linecap="round"/>
<circle cx="722.7" cy="153.75" r="13.25" fill="#1b2028" stroke="#000" stroke-width="3.30"/>
<circle cx="722.7" cy="153.75" r="10.80" fill="none" stroke="#4c525a" stroke-width="1.4"/>
<line x1="719.16" y1="157.29" x2="714.64" y2="161.81" stroke="#b4b8be" stroke-width="2.5"/>
<circle cx="713.15" cy="163.30" r="1.4" fill="#f01418"/>
<text x="722.70" y="184.45" font-size="8.25" fill="#a4a9b0" text-anchor="middle" font-weight="normal" stroke="#a4a9b0" stroke-width="0.33" >VOL</text>
<circle cx="657.3" cy="134.3" r="5.1" fill="#10141a"/>
<path d="M655.17,136.09A2.6,2.6 0 1 1 659.43,136.09" fill="none" stroke="#555b63" stroke-width="1.2"/>
<circle cx="704.5999999999999" cy="134.3" r="5.1" fill="#10141a"/>
<path d="M702.47,136.09A2.6,2.6 0 1 1 706.73,136.09" fill="none" stroke="#9563c9" stroke-width="1.2"/>
<path d="M292.9,30.4L294.2,38.3L330.6,30.8" fill="#9563c9" fill-opacity="0.3" stroke="#9563c9" stroke-width="1.3"/>
<path d="M516.9,30.4L518.2,39.5L533,30.8" fill="#9563c9" fill-opacity="0.3" stroke="#9563c9" stroke-width="1.3"/>
<rect x="774.00" y="31.00" width="190.20" height="27.60" fill="#0c1014" />
<path d="M805.8,30.6L810.2,48.6L812.2,30.6" fill="#9563c9" fill-opacity="0.4" stroke="#9563c9" stroke-width="1.1" stroke-linejoin="round"/>
<circle cx="778.2" cy="78.5" r="2.3" fill="#0e1216"/>
<text x="794.10" y="80.34" font-size="8.2" fill="#a4a9b0" text-anchor="middle" font-weight="normal" stroke="#a4a9b0" stroke-width="0.33" >A</text>
<circle cx="778.2" cy="98.3" r="2.3" fill="#a070d8"/>
<text x="794.10" y="101.34" font-size="8.2" fill="#a4a9b0" text-anchor="middle" font-weight="normal" stroke="#a4a9b0" stroke-width="0.33" >B</text>
<circle cx="778.2" cy="130.4" r="2.3" fill="#0e1216"/>
<text x="794.10" y="133.44" font-size="8.2" fill="#a4a9b0" text-anchor="middle" font-weight="normal" stroke="#a4a9b0" stroke-width="0.33" >N</text>
<circle cx="778.2" cy="151" r="2.3" fill="#0e1216"/>
<text x="794.10" y="154.04" font-size="8.2" fill="#a4a9b0" text-anchor="middle" font-weight="normal" stroke="#a4a9b0" stroke-width="0.33" >S</text>
<circle cx="778.2" cy="182.4" r="2.3" fill="#0e1216"/>
<rect x="788.20" y="178.20" width="12.4" height="8.2" rx="0.8" fill="#d0d4d9"/>
<rect x="791.00" y="178.00" width="2.1" height="4.3" fill="#1c222a"/>
<rect x="791.75" y="182.20" width="0.6" height="4.4" fill="#1c222a"/>
<rect x="795.60" y="178.00" width="2.1" height="4.3" fill="#1c222a"/>
<rect x="796.35" y="182.20" width="0.6" height="4.4" fill="#1c222a"/>
<circle cx="842.4" cy="70.15" r="1.05" fill="#525860"/>
<path d="M832.49,102.99A15.75,15.75 0 1 1 852.31,102.99" fill="none" stroke="#525860" stroke-width="1.90"/>
<circle cx="842.4" cy="90.75" r="13.25" fill="#1b2028" stroke="#000" stroke-width="3.30"/>
<line x1="837.51" y1="89.71" x2="831.25" y2="88.38" stroke="#b4b8be" stroke-width="2.5"/>
<circle cx="829.20" cy="87.94" r="1.4" fill="#f01418"/>
<text x="842.40" y="121.15" font-size="8.25" fill="#a4a9b0" text-anchor="middle" font-weight="normal" stroke="#a4a9b0" stroke-width="0.33" >FREQ</text>
<circle cx="889.7" cy="70.15" r="1.05" fill="#525860"/>
<path d="M879.79,102.99A15.75,15.75 0 1 1 899.61,102.99" fill="none" stroke="#525860" stroke-width="1.90"/>
<circle cx="889.7" cy="90.75" r="13.25" fill="#1b2028" stroke="#000" stroke-width="3.30"/>
<line x1="885.17" y1="88.64" x2="879.37" y2="85.93" stroke="#b4b8be" stroke-width="2.5"/>
<circle cx="877.46" cy="85.04" r="1.4" fill="#f01418"/>
<text x="889.70" y="121.15" font-size="8.25" fill="#a4a9b0" text-anchor="middle" font-weight="normal" stroke="#a4a9b0" stroke-width="0.33" >RES</text>
<circle cx="937.2" cy="70.15" r="1.05" fill="#525860"/>
<path d="M927.29,102.99A15.75,15.75 0 1 1 947.11,102.99" fill="none" stroke="#525860" stroke-width="1.90"/>
<circle cx="937.2" cy="90.75" r="13.25" fill="#1b2028" stroke="#000" stroke-width="3.30"/>
<line x1="937.20" y1="85.75" x2="937.20" y2="79.35" stroke="#b4b8be" stroke-width="2.5"/>
<circle cx="937.20" cy="77.25" r="1.4" fill="#f01418"/>
<text x="937.20" y="121.15" font-size="8.25" fill="#a4a9b0" text-anchor="middle" font-weight="normal" stroke="#a4a9b0" stroke-width="0.33" >PAN</text>
<circle cx="842.4" cy="133.20" r="1.05" fill="#525860"/>
<path d="M832.49,166.04A15.75,15.75 0 1 1 852.31,166.04" fill="none" stroke="#525860" stroke-width="1.90"/>
<circle cx="842.4" cy="153.8" r="13.25" fill="#1b2028" stroke="#000" stroke-width="3.30"/>
<line x1="838.99" y1="157.46" x2="834.63" y2="162.14" stroke="#b4b8be" stroke-width="2.5"/>
<circle cx="833.19" cy="163.67" r="1.4" fill="#f01418"/>
<text x="842.40" y="184.45" font-size="8.25" fill="#a4a9b0" text-anchor="middle" font-weight="normal" stroke="#a4a9b0" stroke-width="0.33" >DRIVE</text>
<circle cx="889.7" cy="133.20" r="1.05" fill="#525860"/>
<path d="M879.79,166.04A15.75,15.75 0 1 1 899.61,166.04" fill="none" stroke="#525860" stroke-width="1.90"/>
<circle cx="889.7" cy="153.8" r="13.25" fill="#1b2028" stroke="#000" stroke-width="3.30"/>
<line x1="886.90" y1="149.65" x2="883.33" y2="144.35" stroke="#b4b8be" stroke-width="2.5"/>
<circle cx="882.15" cy="142.61" r="1.4" fill="#f01418"/>
<circle cx="937.2" cy="133.20" r="1.05" fill="#525860"/>
<path d="M927.29,166.04A15.75,15.75 0 1 1 947.11,166.04" fill="none" stroke="#525860" stroke-width="1.90"/>
<circle cx="937.2" cy="153.8" r="13.25" fill="#1b2028" stroke="#000" stroke-width="3.30"/>
<circle cx="937.2" cy="153.8" r="10.80" fill="none" stroke="#4c525a" stroke-width="1.4"/>
<line x1="941.69" y1="155.99" x2="947.45" y2="158.80" stroke="#b4b8be" stroke-width="2.5"/>
<circle cx="949.33" cy="159.72" r="1.4" fill="#f01418"/>
<text x="937.20" y="184.45" font-size="8.25" fill="#a4a9b0" text-anchor="middle" font-weight="normal" stroke="#a4a9b0" stroke-width="0.33" >MIX</text>
<rect x="871.20" y="176.00" width="37.60" height="12.40" fill="#0e1217" />
<text x="891.40" y="185.39" font-size="8.9" fill="#dfe3e8" text-anchor="middle" font-weight="bold"  >DAMP</text>
<rect x="31.50" y="198.40" width="77.50" height="28.20" fill="#1c222a" />
<text x="42.20" y="215.92" font-size="11.5" fill="#dfe3e8" text-anchor="start" font-weight="normal"  stroke="#dfe3e8" stroke-width="0.5" letter-spacing="0.42">MOD</text>
<path d="M87.88,217.31A7.95,7.95 0 1 1 98.72,217.31" fill="none" stroke="#aab4be" stroke-width="1.7"/>
<rect x="111.10" y="198.40" width="103.10" height="28.20" fill="#1c222a" />
<rect x="111.10" y="224.60" width="103.10" height="2.30" fill="#9563c9" />
<text x="122.10" y="215.92" font-size="11.5" fill="#dfe3e8" text-anchor="start" font-weight="normal"  stroke="#dfe3e8" stroke-width="0.5" letter-spacing="0.42">ENV 1</text>
<path d="M192.98,217.31A7.95,7.95 0 1 1 203.82,217.31" fill="none" stroke="#aab4be" stroke-width="1.7"/>
<rect x="216.50" y="198.40" width="102.90" height="28.20" fill="#1c222a" />
<text x="227.50" y="215.92" font-size="11.5" fill="#dfe3e8" text-anchor="start" font-weight="normal"  stroke="#dfe3e8" stroke-width="0.5" letter-spacing="0.42">ENV 2</text>
<path d="M298.18,217.31A7.95,7.95 0 1 1 309.02,217.31" fill="none" stroke="#aab4be" stroke-width="1.7"/>
<text x="303.60" y="215.07" font-size="9.4" fill="#b9c0c8" text-anchor="middle" font-weight="normal"  stroke="#b9c0c8" stroke-width="0.2">1</text>
<rect x="321.60" y="198.40" width="103.90" height="28.20" fill="#1c222a" />
<text x="332.60" y="215.92" font-size="11.5" fill="#dfe3e8" text-anchor="start" font-weight="normal"  stroke="#dfe3e8" stroke-width="0.5" letter-spacing="0.42">ENV 3</text>
<path d="M404.28,217.31A7.95,7.95 0 1 1 415.12,217.31" fill="none" stroke="#aab4be" stroke-width="1.7"/>
<rect x="427.80" y="198.40" width="94.20" height="28.20" fill="#1c222a" />
<text x="432.30" y="215.92" font-size="11.5" fill="#dfe3e8" text-anchor="start" font-weight="normal"  stroke="#dfe3e8" stroke-width="0.5" letter-spacing="0.42">LF 1</text>
<path d="M501.18,217.31A7.95,7.95 0 1 1 512.02,217.31" fill="none" stroke="#aab4be" stroke-width="1.7"/>
<text x="506.60" y="215.07" font-size="9.4" fill="#b9c0c8" text-anchor="middle" font-weight="normal"  stroke="#b9c0c8" stroke-width="0.2">1</text>
<rect x="524.40" y="198.40" width="94.60" height="28.20" fill="#1c222a" />
<text x="528.90" y="215.92" font-size="11.5" fill="#dfe3e8" text-anchor="start" font-weight="normal"  stroke="#dfe3e8" stroke-width="0.5" letter-spacing="0.42">LF 2</text>
<path d="M597.98,217.31A7.95,7.95 0 1 1 608.82,217.31" fill="none" stroke="#aab4be" stroke-width="1.7"/>
<text x="603.40" y="215.07" font-size="9.4" fill="#b9c0c8" text-anchor="middle" font-weight="normal"  stroke="#b9c0c8" stroke-width="0.2">1</text>
<rect x="621.60" y="198.40" width="94.40" height="28.20" fill="#1c222a" />
<rect x="621.60" y="224.60" width="94.40" height="2.30" fill="#9563c9" />
<text x="642.50" y="215.92" font-size="11.5" fill="#dfe3e8" text-anchor="start" font-weight="normal"  stroke="#dfe3e8" stroke-width="0.5" letter-spacing="0.42">LF 3</text>
<path d="M694.98,217.31A7.95,7.95 0 1 1 705.82,217.31" fill="none" stroke="#d0d5da" stroke-width="1.85"/>
<text x="700.40" y="215.07" font-size="9.4" fill="#dfe3e8" text-anchor="middle" font-weight="bold"  >2</text>
<rect x="718.60" y="198.40" width="94.00" height="28.20" fill="#1c222a" />
<text x="723.10" y="215.92" font-size="11.5" fill="#dfe3e8" text-anchor="start" font-weight="normal"  stroke="#dfe3e8" stroke-width="0.5" letter-spacing="0.42">LF 4</text>
<path d="M791.58,217.31A7.95,7.95 0 1 1 802.42,217.31" fill="none" stroke="#aab4be" stroke-width="1.7"/>
<rect x="819.60" y="198.40" width="75.70" height="28.20" fill="#1c222a" />
<rect x="819.60" y="224.60" width="75.70" height="2.30" fill="#9563c9" />
<text x="830.60" y="215.92" font-size="11.5" fill="#dfe3e8" text-anchor="start" font-weight="normal"  stroke="#dfe3e8" stroke-width="0.5" letter-spacing="0.42">VEL</text>
<path d="M873.88,217.31A7.95,7.95 0 1 1 884.72,217.31" fill="none" stroke="#aab4be" stroke-width="1.7"/>
<rect x="897.40" y="198.40" width="78.00" height="28.20" fill="#1c222a" />
<text x="908.20" y="215.92" font-size="11.5" fill="#dfe3e8" text-anchor="start" font-weight="normal"  stroke="#dfe3e8" stroke-width="0.5" letter-spacing="0.42">NOTE</text>
<path d="M957.18,217.31A7.95,7.95 0 1 1 968.02,217.31" fill="none" stroke="#aab4be" stroke-width="1.7"/>
<path d="M627.6,211L630.7,205.9L633.8,211M627.9,214.6L630.7,218.2L633.5,214.6" fill="none" stroke="#8d939b" stroke-width="1.1"/>
<circle cx="630.6" cy="212.3" r="0.8" fill="#9aa0a8"/>
<rect x="31.00" y="228.60" width="77.80" height="43.00" fill="#1c222a" />
<rect x="31.00" y="273.40" width="77.80" height="13.80" fill="#0e1217" />
<circle cx="54.3" cy="235.20" r="1.05" fill="#525860"/>
<path d="M45.58,264.57A13.852409638554215,13.852409638554215 0 1 1 63.02,264.57" fill="none" stroke="#525860" stroke-width="1.67"/>
<circle cx="54.3" cy="253.79999999999998" r="11.65" fill="#1b2028" stroke="#000" stroke-width="2.90"/>
<line x1="58.70" y1="253.80" x2="64.33" y2="253.80" stroke="#b4b8be" stroke-width="2.5"/>
<circle cx="66.17" cy="253.80" r="1.4" fill="#f01418"/>
<text x="70.00" y="283.45" font-size="8.8" fill="#dfe3e8" text-anchor="middle" font-weight="bold"  letter-spacing="-0.25">FILTER</text>
<path d="M87.71,267.78A7.9,7.9 0 1 1 98.49,267.78" fill="none" stroke="#d0d5da" stroke-width="1.8"/>
<text x="93.10" y="265.57" font-size="9.4" fill="#dfe3e8" text-anchor="middle" font-weight="bold"  >1</text>
<rect x="31.00" y="288.95" width="77.80" height="43.00" fill="#1c222a" />
<rect x="31.00" y="333.75" width="77.80" height="13.80" fill="#0e1217" />
<circle cx="54.3" cy="295.55" r="1.05" fill="#525860"/>
<path d="M45.58,324.92A13.852409638554215,13.852409638554215 0 1 1 63.02,324.92" fill="none" stroke="#525860" stroke-width="1.67"/>
<circle cx="54.3" cy="314.15" r="11.65" fill="#1b2028" stroke="#000" stroke-width="2.90"/>
<line x1="58.63" y1="314.91" x2="64.17" y2="315.89" stroke="#b4b8be" stroke-width="2.5"/>
<circle cx="65.99" cy="316.21" r="1.4" fill="#f01418"/>
<text x="70.00" y="343.80" font-size="8.8" fill="#dfe3e8" text-anchor="middle" font-weight="bold"  letter-spacing="-0.25">RESONANCE</text>
<path d="M87.71,328.13A7.9,7.9 0 1 1 98.49,328.13" fill="none" stroke="#d0d5da" stroke-width="1.8"/>
<text x="93.10" y="325.92" font-size="9.4" fill="#dfe3e8" text-anchor="middle" font-weight="bold"  >1</text>
<rect x="31.00" y="349.30" width="77.80" height="43.00" fill="#1c222a" />
<rect x="31.00" y="394.10" width="77.80" height="13.80" fill="#0e1217" />
<circle cx="54.3" cy="355.90" r="1.05" fill="#525860"/>
<path d="M45.58,385.27A13.852409638554215,13.852409638554215 0 1 1 63.02,385.27" fill="none" stroke="#525860" stroke-width="1.67"/>
<circle cx="54.3" cy="374.5" r="11.65" fill="#1b2028" stroke="#000" stroke-width="2.90"/>
<line x1="56.50" y1="370.69" x2="59.31" y2="365.82" stroke="#b4b8be" stroke-width="2.5"/>
<circle cx="60.24" cy="364.22" r="1.4" fill="#f01418"/>
<text x="70.00" y="404.15" font-size="8.8" fill="#dfe3e8" text-anchor="middle" font-weight="bold"  letter-spacing="-0.25">FX</text>
<path d="M87.71,388.48A7.9,7.9 0 1 1 98.49,388.48" fill="none" stroke="#d0d5da" stroke-width="1.8"/>
<text x="93.10" y="386.27" font-size="9.4" fill="#dfe3e8" text-anchor="middle" font-weight="bold"  >4</text>
<rect x="31.00" y="409.65" width="77.80" height="43.00" fill="#1c222a" />
<rect x="31.00" y="454.45" width="77.80" height="13.80" fill="#0e1217" />
<circle cx="54.3" cy="416.25" r="1.05" fill="#525860"/>
<path d="M45.58,445.62A13.852409638554215,13.852409638554215 0 1 1 63.02,445.62" fill="none" stroke="#525860" stroke-width="1.67"/>
<circle cx="54.3" cy="434.84999999999997" r="11.65" fill="#1b2028" stroke="#000" stroke-width="2.90"/>
<line x1="54.30" y1="430.45" x2="54.30" y2="424.82" stroke="#b4b8be" stroke-width="2.5"/>
<circle cx="54.30" cy="422.98" r="1.4" fill="#f01418"/>
<text x="70.00" y="464.50" font-size="8.8" fill="#dfe3e8" text-anchor="middle" font-weight="bold"  letter-spacing="-0.25">LFO RATE</text>
<path d="M87.71,448.83A7.9,7.9 0 1 1 98.49,448.83" fill="none" stroke="#d0d5da" stroke-width="1.8"/>
<text x="93.10" y="446.62" font-size="9.4" fill="#dfe3e8" text-anchor="middle" font-weight="bold"  >2</text>
<rect x="111.20" y="229.00" width="286.20" height="144.00" fill="#0c1014" />
<line x1="137.35" y1="229" x2="137.35" y2="373" stroke="#10151a" stroke-width="1"/>
<line x1="159.50" y1="229" x2="159.50" y2="373" stroke="#10151a" stroke-width="1"/>
<line x1="181.65" y1="229" x2="181.65" y2="373" stroke="#10151a" stroke-width="1"/>
<line x1="203.80" y1="229" x2="203.80" y2="373" stroke="#2c3138" stroke-width="1"/>
<line x1="225.95" y1="229" x2="225.95" y2="373" stroke="#10151a" stroke-width="1"/>
<line x1="248.10" y1="229" x2="248.10" y2="373" stroke="#10151a" stroke-width="1"/>
<line x1="270.25" y1="229" x2="270.25" y2="373" stroke="#10151a" stroke-width="1"/>
<line x1="292.40" y1="229" x2="292.40" y2="373" stroke="#2c3138" stroke-width="1"/>
<line x1="314.55" y1="229" x2="314.55" y2="373" stroke="#10151a" stroke-width="1"/>
<line x1="336.70" y1="229" x2="336.70" y2="373" stroke="#10151a" stroke-width="1"/>
<line x1="358.85" y1="229" x2="358.85" y2="373" stroke="#10151a" stroke-width="1"/>
<line x1="381.00" y1="229" x2="381.00" y2="373" stroke="#2c3138" stroke-width="1"/>
<path d="M116,373L116,231L203.8,231L203.80,231.00L205.74,236.51L207.68,241.88L209.62,247.12L211.56,252.23L213.50,257.21L215.44,262.07L217.38,266.81L219.32,271.43L221.26,275.94L223.20,280.34L225.14,284.63L227.08,288.81L229.02,292.89L230.96,296.87L232.90,300.75L234.84,304.54L236.78,308.23L238.72,311.83L240.66,315.34L242.60,318.77L244.54,322.11L246.48,325.37L248.42,328.54L250.36,331.64L252.30,334.66L254.24,337.61L256.18,340.49L258.12,343.29L260.06,346.03L262.00,348.69L263.94,351.29L265.88,353.83L267.82,356.31L269.76,358.72L271.70,361.07L273.64,363.37L275.58,365.61L277.52,367.79L279.46,369.92L281.40,372.00L281.4,373Z" fill="#221c30"/>
<path d="M116,373L116.00,231.40L119.20,238.97L122.40,246.15L125.60,252.96L128.80,259.41L132.00,265.53L135.20,271.33L138.40,276.83L141.60,282.04L144.80,286.98L148.00,291.67L151.20,296.11L154.40,300.32L157.60,304.31L160.80,308.10L164.00,311.69L167.20,315.09L170.40,318.32L173.60,321.38L176.80,324.27L180.00,327.02L183.20,329.63L186.40,332.10L189.60,334.44L192.80,336.66L196.00,338.77L199.20,340.76L202.40,342.66L205.60,344.45L208.80,346.15L212.00,347.76L215.20,349.29L218.40,350.74L221.60,352.12L224.80,353.42L228.00,354.65L231.20,355.83L234.40,356.94L237.60,357.99L240.80,358.99L244.00,359.93L247.20,360.83L250.40,361.68L253.60,362.49L256.80,363.25L260.00,363.97L263.20,364.66L266.40,365.31L269.60,365.93L272.80,366.52L276.00,367.07L279.20,367.60L281.4,373Z" fill="#2f2a40"/>
<line x1="137.35" y1="231" x2="137.35" y2="371" stroke="#2a2537" stroke-width="1" opacity="0.7"/>
<line x1="159.50" y1="231" x2="159.50" y2="371" stroke="#2a2537" stroke-width="1" opacity="0.7"/>
<line x1="181.65" y1="231" x2="181.65" y2="371" stroke="#2a2537" stroke-width="1" opacity="0.7"/>
<line x1="203.80" y1="231" x2="203.80" y2="371" stroke="#4d4b5b" stroke-width="1" opacity="0.7"/>
<line x1="225.95" y1="231" x2="225.95" y2="371" stroke="#2a2537" stroke-width="1" opacity="0.7"/>
<line x1="248.10" y1="231" x2="248.10" y2="371" stroke="#2a2537" stroke-width="1" opacity="0.7"/>
<line x1="270.25" y1="231" x2="270.25" y2="371" stroke="#2a2537" stroke-width="1" opacity="0.7"/>
<path d="M116.00,231.40L119.20,238.97L122.40,246.15L125.60,252.96L128.80,259.41L132.00,265.53L135.20,271.33L138.40,276.83L141.60,282.04L144.80,286.98L148.00,291.67L151.20,296.11L154.40,300.32L157.60,304.31L160.80,308.10L164.00,311.69L167.20,315.09L170.40,318.32L173.60,321.38L176.80,324.27L180.00,327.02L183.20,329.63L186.40,332.10L189.60,334.44L192.80,336.66L196.00,338.77L199.20,340.76L202.40,342.66L205.60,344.45L208.80,346.15L212.00,347.76L215.20,349.29L218.40,350.74L221.60,352.12L224.80,353.42L228.00,354.65L231.20,355.83L234.40,356.94L237.60,357.99L240.80,358.99L244.00,359.93L247.20,360.83L250.40,361.68L253.60,362.49L256.80,363.25L260.00,363.97L263.20,364.66L266.40,365.31L269.60,365.93L272.80,366.52L276.00,367.07L279.20,367.60L282.40,368.10L285.60,368.57L288.80,369.02L292.00,369.44L295.20,369.84L298.40,370.23L301.60,370.59L304.80,370.93L308.00,371.26L311.20,371.57L314.40,371.86L317.60,372.00L320.80,372.00L324.00,372.00L327.20,372.00L330.40,372.00L333.60,372.00L336.80,372.00L340.00,372.00L343.20,372.00L346.40,372.00L349.60,372.00L352.80,372.00L356.00,372.00L359.20,372.00L362.40,372.00L365.60,372.00L368.80,372.00L372.00,372.00" fill="none" stroke="#9694a3" stroke-width="1.25"/>
<path d="M116,373L116,231L203.8,231L203.80,231.00L205.74,236.51L207.68,241.88L209.62,247.12L211.56,252.23L213.50,257.21L215.44,262.07L217.38,266.81L219.32,271.43L221.26,275.94L223.20,280.34L225.14,284.63L227.08,288.81L229.02,292.89L230.96,296.87L232.90,300.75L234.84,304.54L236.78,308.23L238.72,311.83L240.66,315.34L242.60,318.77L244.54,322.11L246.48,325.37L248.42,328.54L250.36,331.64L252.30,334.66L254.24,337.61L256.18,340.49L258.12,343.29L260.06,346.03L262.00,348.69L263.94,351.29L265.88,353.83L267.82,356.31L269.76,358.72L271.70,361.07L273.64,363.37L275.58,365.61L277.52,367.79L279.46,369.92L281.40,372.00" fill="none" stroke="#9563c9" stroke-width="1.5"/>
<circle cx="242.7" cy="317.4" r="2.3" fill="#221c30" stroke="#9563c9" stroke-width="1.1"/>
<rect x="114.40" y="229.60" width="3.20" height="2.80" fill="#b8bcc2" />
<rect x="114.40" y="370.60" width="3.20" height="2.80" fill="#b8bcc2" />
<path d="M201,229.5h5.6l-1.3,3h-3z" fill="#b8c0c4"/>
<path d="M279,373.2a2.5,2.5 0 0 1 5,0z" fill="#c8ccd2"/>
<text x="200.80" y="369.81" font-size="7" fill="#c9cdd2" text-anchor="end" font-weight="bold"  >1</text>
<text x="202.10" y="370.76" font-size="6.6" fill="#b4b8be" text-anchor="start" font-weight="bold"  >s</text>
<text x="289.20" y="369.81" font-size="7" fill="#c9cdd2" text-anchor="end" font-weight="bold"  >2</text>
<text x="290.50" y="370.76" font-size="6.6" fill="#b4b8be" text-anchor="start" font-weight="bold"  >s</text>
<text x="378.00" y="369.81" font-size="7" fill="#c9cdd2" text-anchor="end" font-weight="bold"  >3</text>
<text x="379.30" y="370.76" font-size="6.6" fill="#b4b8be" text-anchor="start" font-weight="bold"  >s</text>
<rect x="398.60" y="229.00" width="22.40" height="23.00" fill="#1c222a" />
<rect x="398.60" y="254.60" width="22.40" height="118.40" fill="#1c222a" />
<rect x="404" y="239.6" width="9.6" height="8" rx="1" fill="#353b43"/><path d="M406.2,239.8v-2.3a2.6,2.6 0 0 1 5.2,0v2.3" fill="none" stroke="#353b43" stroke-width="1.6"/>
<circle cx="407" cy="311.8" r="3.8" fill="none" stroke="#666c74" stroke-width="1.7"/><line x1="409.9" y1="314.8" x2="413.6" y2="318.6" stroke="#666c74" stroke-width="2.1"/>
<rect x="430.40" y="229.00" width="379.90" height="143.60" fill="#0c1014" />
<path d="M431.00,301.30L433.38,295.64L435.75,290.31L438.12,285.28L440.50,280.57L442.88,276.14L445.25,271.99L447.62,268.12L450.00,264.51L452.38,261.14L454.75,258.02L457.12,255.13L459.50,252.46L461.88,250.00L464.25,247.74L466.62,245.67L469.00,243.78L471.38,242.07L473.75,240.52L476.12,239.12L478.50,237.87L480.88,236.75L483.25,235.76L485.62,234.89L488.00,234.13L490.38,233.47L492.75,232.91L495.12,232.43L497.50,232.03L499.88,231.70L502.25,231.43L504.62,231.21L507.00,231.05L509.38,230.92L511.75,230.83L514.12,230.77L516.50,230.74L518.88,230.71L521.25,230.70L523.62,230.70L526.00,230.70L526.00,230.70L528.37,230.70L530.74,230.70L533.11,230.71L535.48,230.74L537.85,230.77L540.22,230.83L542.59,230.92L544.96,231.05L547.33,231.21L549.70,231.43L552.07,231.70L554.44,232.03L556.81,232.43L559.18,232.91L561.55,233.47L563.92,234.13L566.29,234.89L568.66,235.76L571.03,236.75L573.40,237.87L575.77,239.12L578.14,240.52L580.51,242.07L582.88,243.78L585.25,245.67L587.62,247.74L589.99,250.00L592.36,252.46L594.73,255.13L597.10,258.02L599.47,261.14L601.84,264.51L604.21,268.12L606.58,271.99L608.95,276.14L611.32,280.57L613.69,285.28L616.06,290.31L618.43,295.64L620.80,301.30L620.80,301.30L623.17,306.90L625.54,312.18L627.91,317.16L630.28,321.83L632.65,326.21L635.02,330.32L637.39,334.15L639.76,337.73L642.13,341.06L644.50,344.15L646.87,347.01L649.24,349.66L651.61,352.09L653.98,354.33L656.35,356.38L658.72,358.25L661.09,359.94L663.46,361.48L665.83,362.86L668.20,364.10L670.57,365.21L672.94,366.19L675.31,367.05L677.68,367.80L680.05,368.45L682.42,369.01L684.79,369.49L687.16,369.88L689.53,370.21L691.90,370.48L694.27,370.69L696.64,370.85L699.01,370.98L701.38,371.07L703.75,371.13L706.12,371.16L708.49,371.19L710.86,371.20L713.23,371.20L715.60,371.20L715.60,371.20L717.96,371.20L720.31,371.20L722.66,371.19L725.02,371.16L727.38,371.13L729.73,371.07L732.09,370.98L734.44,370.85L736.79,370.69L739.15,370.48L741.50,370.21L743.86,369.88L746.22,369.49L748.57,369.01L750.92,368.45L753.28,367.80L755.63,367.05L757.99,366.19L760.35,365.21L762.70,364.10L765.05,362.86L767.41,361.48L769.76,359.94L772.12,358.25L774.48,356.38L776.83,354.33L779.18,352.09L781.54,349.66L783.89,347.01L786.25,344.15L788.61,341.06L790.96,337.73L793.31,334.15L795.67,330.32L798.02,326.21L800.38,321.83L802.73,317.16L805.09,312.18L807.44,306.90L809.80,301.30L809.8,372.6L431,372.6Z" fill="#221c30"/>
<line x1="477.85" y1="229" x2="477.85" y2="372.6" stroke="#9fb0c0" stroke-width="1" opacity="0.075"/>
<line x1="525.30" y1="229" x2="525.30" y2="372.6" stroke="#9fb0c0" stroke-width="1" opacity="0.075"/>
<line x1="572.75" y1="229" x2="572.75" y2="372.6" stroke="#9fb0c0" stroke-width="1" opacity="0.075"/>
<line x1="620.20" y1="229" x2="620.20" y2="372.6" stroke="#9fb0c0" stroke-width="1" opacity="0.075"/>
<line x1="667.65" y1="229" x2="667.65" y2="372.6" stroke="#9fb0c0" stroke-width="1" opacity="0.075"/>
<line x1="715.10" y1="229" x2="715.10" y2="372.6" stroke="#9fb0c0" stroke-width="1" opacity="0.075"/>
<line x1="762.55" y1="229" x2="762.55" y2="372.6" stroke="#9fb0c0" stroke-width="1" opacity="0.075"/>
<line x1="430.4" y1="249.05" x2="810.3" y2="249.05" stroke="#9fb0c0" stroke-width="1" opacity="0.075"/>
<line x1="430.4" y1="266.50" x2="810.3" y2="266.50" stroke="#9fb0c0" stroke-width="1" opacity="0.075"/>
<line x1="430.4" y1="283.95" x2="810.3" y2="283.95" stroke="#9fb0c0" stroke-width="1" opacity="0.075"/>
<line x1="430.4" y1="301.40" x2="810.3" y2="301.40" stroke="#9fb0c0" stroke-width="1" opacity="0.075"/>
<line x1="430.4" y1="318.85" x2="810.3" y2="318.85" stroke="#9fb0c0" stroke-width="1" opacity="0.075"/>
<line x1="430.4" y1="336.30" x2="810.3" y2="336.30" stroke="#9fb0c0" stroke-width="1" opacity="0.075"/>
<line x1="430.4" y1="353.75" x2="810.3" y2="353.75" stroke="#9fb0c0" stroke-width="1" opacity="0.075"/>
<clipPath id="lc"><rect x="430.4" y="229" width="379.9" height="143.60000000000002"/></clipPath>
<g clip-path="url(#lc)"><path d="M431.00,301.30L433.38,295.64L435.75,290.31L438.12,285.28L440.50,280.57L442.88,276.14L445.25,271.99L447.62,268.12L450.00,264.51L452.38,261.14L454.75,258.02L457.12,255.13L459.50,252.46L461.88,250.00L464.25,247.74L466.62,245.67L469.00,243.78L471.38,242.07L473.75,240.52L476.12,239.12L478.50,237.87L480.88,236.75L483.25,235.76L485.62,234.89L488.00,234.13L490.38,233.47L492.75,232.91L495.12,232.43L497.50,232.03L499.88,231.70L502.25,231.43L504.62,231.21L507.00,231.05L509.38,230.92L511.75,230.83L514.12,230.77L516.50,230.74L518.88,230.71L521.25,230.70L523.62,230.70L526.00,230.70L526.00,230.70L528.37,230.70L530.74,230.70L533.11,230.71L535.48,230.74L537.85,230.77L540.22,230.83L542.59,230.92L544.96,231.05L547.33,231.21L549.70,231.43L552.07,231.70L554.44,232.03L556.81,232.43L559.18,232.91L561.55,233.47L563.92,234.13L566.29,234.89L568.66,235.76L571.03,236.75L573.40,237.87L575.77,239.12L578.14,240.52L580.51,242.07L582.88,243.78L585.25,245.67L587.62,247.74L589.99,250.00L592.36,252.46L594.73,255.13L597.10,258.02L599.47,261.14L601.84,264.51L604.21,268.12L606.58,271.99L608.95,276.14L611.32,280.57L613.69,285.28L616.06,290.31L618.43,295.64L620.80,301.30L620.80,301.30L623.17,306.90L625.54,312.18L627.91,317.16L630.28,321.83L632.65,326.21L635.02,330.32L637.39,334.15L639.76,337.73L642.13,341.06L644.50,344.15L646.87,347.01L649.24,349.66L651.61,352.09L653.98,354.33L656.35,356.38L658.72,358.25L661.09,359.94L663.46,361.48L665.83,362.86L668.20,364.10L670.57,365.21L672.94,366.19L675.31,367.05L677.68,367.80L680.05,368.45L682.42,369.01L684.79,369.49L687.16,369.88L689.53,370.21L691.90,370.48L694.27,370.69L696.64,370.85L699.01,370.98L701.38,371.07L703.75,371.13L706.12,371.16L708.49,371.19L710.86,371.20L713.23,371.20L715.60,371.20L715.60,371.20L717.96,371.20L720.31,371.20L722.66,371.19L725.02,371.16L727.38,371.13L729.73,371.07L732.09,370.98L734.44,370.85L736.79,370.69L739.15,370.48L741.50,370.21L743.86,369.88L746.22,369.49L748.57,369.01L750.92,368.45L753.28,367.80L755.63,367.05L757.99,366.19L760.35,365.21L762.70,364.10L765.05,362.86L767.41,361.48L769.76,359.94L772.12,358.25L774.48,356.38L776.83,354.33L779.18,352.09L781.54,349.66L783.89,347.01L786.25,344.15L788.61,341.06L790.96,337.73L793.31,334.15L795.67,330.32L798.02,326.21L800.38,321.83L802.73,317.16L805.09,312.18L807.44,306.90L809.80,301.30" fill="none" stroke="#9563c9" stroke-width="1.4"/>
<circle cx="478.2" cy="238.2" r="2.3" fill="none" stroke="#9563c9" stroke-width="1"/>
<circle cx="572.5" cy="237.6" r="2.3" fill="none" stroke="#9563c9" stroke-width="1"/>
<circle cx="667.1" cy="364.8" r="2.3" fill="none" stroke="#9563c9" stroke-width="1"/>
<circle cx="761.8" cy="365.4" r="2.3" fill="none" stroke="#9563c9" stroke-width="1"/>
<circle cx="431" cy="301.3" r="2.5" fill="#b9bdc6"/>
<circle cx="526" cy="230.7" r="2.5" fill="#b9bdc6"/>
<circle cx="620.8" cy="301.3" r="2.5" fill="#b9bdc6"/>
<circle cx="715.6" cy="371.2" r="2.5" fill="#b9bdc6"/>
<circle cx="809.8" cy="301.3" r="2.5" fill="#b9bdc6"/>
</g>
<rect x="820.20" y="229.00" width="150.20" height="143.60" fill="#0c1014" />
<path d="M821.6,371.2L968.8,230.4L968.8,372.6L821.6,372.6Z" fill="#221c30"/>
<line x1="858.40" y1="229" x2="858.40" y2="372.6" stroke="#9fb0c0" stroke-width="1" opacity="0.075"/>
<line x1="820.2" y1="266.20" x2="970.4" y2="266.20" stroke="#9fb0c0" stroke-width="1" opacity="0.075"/>
<line x1="895.20" y1="229" x2="895.20" y2="372.6" stroke="#9fb0c0" stroke-width="1" opacity="0.075"/>
<line x1="820.2" y1="301.40" x2="970.4" y2="301.40" stroke="#9fb0c0" stroke-width="1" opacity="0.075"/>
<line x1="932.00" y1="229" x2="932.00" y2="372.6" stroke="#9fb0c0" stroke-width="1" opacity="0.075"/>
<line x1="820.2" y1="336.60" x2="970.4" y2="336.60" stroke="#9fb0c0" stroke-width="1" opacity="0.075"/>
<path d="M872.2,323.2H968.8M872.2,323.2V372" fill="none" stroke="#4f3874" stroke-width="1.1" stroke-dasharray="2.6 1"/>
<path d="M821.6,371.2L968.8,230.4" fill="none" stroke="#9563c9" stroke-width="1.5"/>
<circle cx="872.2" cy="323" r="2.2" fill="#6b4a99"/>
<circle cx="895" cy="301.3" r="2.3" fill="#221c30" stroke="#9563c9" stroke-width="1"/>
<rect x="820.40" y="370.00" width="2.40" height="2.40" fill="#c8ccd2" />
<rect x="967.60" y="229.40" width="2.40" height="2.40" fill="#c8ccd2" />
<rect x="109.80" y="375.80" width="315.80" height="92.60" fill="#1c222a" />
<rect x="427.80" y="375.80" width="386.60" height="92.60" fill="#1c222a" />
<rect x="816.80" y="375.80" width="158.00" height="92.60" fill="#1c222a" />
<circle cx="143.7" cy="404.70" r="1.05" fill="#525860"/>
<path d="M133.79,437.54A15.75,15.75 0 1 1 153.61,437.54" fill="none" stroke="#525860" stroke-width="1.90"/>
<circle cx="143.7" cy="425.3" r="13.25" fill="#1b2028" stroke="#000" stroke-width="3.30"/>
<line x1="138.79" y1="426.25" x2="132.51" y2="427.48" stroke="#b4b8be" stroke-width="2.5"/>
<circle cx="130.45" cy="427.88" r="1.4" fill="#f01418"/>
<text x="125.30" y="396.98" font-size="10" fill="#bbbfc5" font-weight="bold" textLength="34" lengthAdjust="spacingAndGlyphs">0.5 ms</text>
<text x="143.70" y="456.15" font-size="8.25" fill="#a4a9b0" text-anchor="middle" font-weight="normal" stroke="#a4a9b0" stroke-width="0.33" >ATTACK</text>
<circle cx="196.4" cy="404.70" r="1.05" fill="#525860"/>
<path d="M186.49,437.54A15.75,15.75 0 1 1 206.31,437.54" fill="none" stroke="#525860" stroke-width="1.90"/>
<circle cx="196.4" cy="425.3" r="13.25" fill="#1b2028" stroke="#000" stroke-width="3.30"/>
<line x1="192.86" y1="428.84" x2="188.34" y2="433.36" stroke="#b4b8be" stroke-width="2.5"/>
<circle cx="186.85" cy="434.85" r="1.4" fill="#f01418"/>
<text x="177.40" y="396.98" font-size="10" fill="#bbbfc5" font-weight="bold" textLength="34" lengthAdjust="spacingAndGlyphs">0.0 ms</text>
<text x="196.40" y="456.15" font-size="8.25" fill="#a4a9b0" text-anchor="middle" font-weight="normal" stroke="#a4a9b0" stroke-width="0.33" >HOLD</text>
<circle cx="266.8" cy="404.70" r="1.05" fill="#525860"/>
<path d="M256.89,437.54A15.75,15.75 0 1 1 276.71,437.54" fill="none" stroke="#525860" stroke-width="1.90"/>
<circle cx="266.8" cy="425.3" r="13.25" fill="#1b2028" stroke="#000" stroke-width="3.30"/>
<line x1="266.80" y1="420.30" x2="266.80" y2="413.90" stroke="#b4b8be" stroke-width="2.5"/>
<circle cx="266.80" cy="411.80" r="1.4" fill="#f01418"/>
<text x="250.70" y="396.98" font-size="10" fill="#bbbfc5" font-weight="bold" textLength="30" lengthAdjust="spacingAndGlyphs">1.00 s</text>
<text x="266.80" y="456.15" font-size="8.25" fill="#a4a9b0" text-anchor="middle" font-weight="normal" stroke="#a4a9b0" stroke-width="0.33" >DECAY</text>
<circle cx="319.7" cy="404.70" r="1.05" fill="#525860"/>
<path d="M309.79,437.54A15.75,15.75 0 1 1 329.61,437.54" fill="none" stroke="#525860" stroke-width="1.90"/>
<circle cx="319.7" cy="425.3" r="13.25" fill="#1b2028" stroke="#000" stroke-width="3.30"/>
<line x1="323.24" y1="428.84" x2="327.76" y2="433.36" stroke="#b4b8be" stroke-width="2.5"/>
<circle cx="329.25" cy="434.85" r="1.4" fill="#f01418"/>
<text x="304.70" y="396.98" font-size="10" fill="#bbbfc5" font-weight="bold" textLength="32.6" lengthAdjust="spacingAndGlyphs">0.0 dB</text>
<text x="319.70" y="456.15" font-size="8.25" fill="#a4a9b0" text-anchor="middle" font-weight="normal" stroke="#a4a9b0" stroke-width="0.33" >SUSTAIN</text>
<circle cx="389.5" cy="404.70" r="1.05" fill="#525860"/>
<path d="M379.59,437.54A15.75,15.75 0 1 1 399.41,437.54" fill="none" stroke="#525860" stroke-width="1.90"/>
<circle cx="389.5" cy="425.3" r="13.25" fill="#1b2028" stroke="#000" stroke-width="3.30"/>
<line x1="389.50" y1="420.30" x2="389.50" y2="413.90" stroke="#b4b8be" stroke-width="2.5"/>
<circle cx="389.50" cy="411.80" r="1.4" fill="#f01418"/>
<text x="369.50" y="396.98" font-size="10" fill="#bbbfc5" font-weight="bold" textLength="36.8" lengthAdjust="spacingAndGlyphs">882 ms</text>
<text x="389.50" y="456.15" font-size="8.25" fill="#a4a9b0" text-anchor="middle" font-weight="normal" stroke="#a4a9b0" stroke-width="0.33" >RELEASE</text>
<circle cx="782.5" cy="404.70" r="1.05" fill="#525860"/>
<path d="M772.59,437.54A15.75,15.75 0 1 1 792.41,437.54" fill="none" stroke="#525860" stroke-width="1.90"/>
<circle cx="782.5" cy="425.3" r="13.25" fill="#1b2028" stroke="#000" stroke-width="3.30"/>
<line x1="778.96" y1="428.84" x2="774.44" y2="433.36" stroke="#b4b8be" stroke-width="2.5"/>
<circle cx="772.95" cy="434.85" r="1.4" fill="#f01418"/>
<text x="775.30" y="396.98" font-size="10" fill="#bbbfc5" font-weight="bold" textLength="15" lengthAdjust="spacingAndGlyphs">0.0</text>
<text x="782.50" y="456.15" font-size="8.25" fill="#a4a9b0" text-anchor="middle" font-weight="normal" stroke="#a4a9b0" stroke-width="0.33" >SMOOTH</text>
<text x="832.20" y="399.01" font-size="12.6" fill="#dfe3e8" text-anchor="start" font-weight="bold"  letter-spacing="0.65">VOICING</text>
<circle cx="836.3" cy="431.2" r="2.3" fill="#0e1216"/>
<circle cx="836.3" cy="454.5" r="2.3" fill="#0e1216"/>
<text x="846.50" y="434.20" font-size="8.1" fill="#a4a9b0" text-anchor="start" font-weight="normal" stroke="#a4a9b0" stroke-width="0.33" letter-spacing="0.15">MONO</text>
<text x="846.50" y="457.40" font-size="8.1" fill="#a4a9b0" text-anchor="start" font-weight="normal" stroke="#a4a9b0" stroke-width="0.33" letter-spacing="0.15">LEGATO</text>
<text x="893.70" y="434.20" font-size="8.1" fill="#a4a9b0" text-anchor="start" font-weight="normal" stroke="#a4a9b0" stroke-width="0.33" >POLY</text>
<rect x="925.00" y="424.20" width="32.20" height="15.60" fill="#0e1217" />
<text x="930.40" y="436.75" font-size="11.3" fill="#d5d9de" font-weight="bold" textLength="7.6" lengthAdjust="spacingAndGlyphs">8</text>
<path d="M945.4000000000001,430.9L948.7,427.2L952.0,430.9Z M945.4000000000001,433.79999999999995L948.7,437.59999999999997L952.0,433.79999999999995Z" fill="#c4c8cd"/>
<rect x="893.20" y="447.10" width="67.10" height="14.70" fill="#0e1217" />
<text x="909.70" y="459.65" font-size="11.3" fill="#d5d9de" font-weight="bold" textLength="7.4" lengthAdjust="spacingAndGlyphs">0</text>
<text x="926.00" y="459.65" font-size="11.3" fill="#d5d9de" font-weight="bold" textLength="4.6" lengthAdjust="spacingAndGlyphs">\</text>
<text x="933.20" y="459.65" font-size="11.3" fill="#d5d9de" font-weight="bold" textLength="14.3" lengthAdjust="spacingAndGlyphs">40</text>
<rect x="30.60" y="471.40" width="140.20" height="88.60" fill="#1c222a" />
<rect x="58.80" y="496.80" width="36.60" height="18.60" fill="#0e1217" />
<text x="71.30" y="508.95" font-size="11.3" fill="#d5d9de" font-weight="bold" textLength="6.9" lengthAdjust="spacingAndGlyphs">2</text>
<path d="M85.9,503.5L89.2,499.8L92.5,503.5Z M85.9,506.4L89.2,510.2L92.5,506.4Z" fill="#c4c8cd"/>
<rect x="58.80" y="526.50" width="36.60" height="18.30" fill="#0e1217" />
<text x="67.70" y="538.55" font-size="11.3" fill="#d5d9de" font-weight="bold" textLength="10.5" lengthAdjust="spacingAndGlyphs">-2</text>
<path d="M85.9,533.3L89.2,529.5999999999999L92.5,533.3Z M85.9,536.1999999999999L89.2,540.0L92.5,536.1999999999999Z" fill="#c4c8cd"/>
<rect x="113.40" y="489.50" width="16.60" height="57.20" fill="#11151a" />
<rect x="115.10" y="491.20" width="13.20" height="53.80" fill="#1c222a" />
<line x1="115.10000000000001" y1="492.6" x2="128.3" y2="492.6" stroke="#161b22" stroke-width="0.7"/>
<line x1="115.10000000000001" y1="494.40000000000003" x2="128.3" y2="494.40000000000003" stroke="#161b22" stroke-width="0.7"/>
<line x1="115.10000000000001" y1="496.20000000000005" x2="128.3" y2="496.20000000000005" stroke="#161b22" stroke-width="0.7"/>
<line x1="115.10000000000001" y1="498.00000000000006" x2="128.3" y2="498.00000000000006" stroke="#161b22" stroke-width="0.7"/>
<line x1="115.10000000000001" y1="499.80000000000007" x2="128.3" y2="499.80000000000007" stroke="#161b22" stroke-width="0.7"/>
<line x1="115.10000000000001" y1="501.6000000000001" x2="128.3" y2="501.6000000000001" stroke="#161b22" stroke-width="0.7"/>
<line x1="115.10000000000001" y1="503.4000000000001" x2="128.3" y2="503.4000000000001" stroke="#161b22" stroke-width="0.7"/>
<line x1="115.10000000000001" y1="505.2000000000001" x2="128.3" y2="505.2000000000001" stroke="#161b22" stroke-width="0.7"/>
<line x1="115.10000000000001" y1="507.0000000000001" x2="128.3" y2="507.0000000000001" stroke="#161b22" stroke-width="0.7"/>
<line x1="115.10000000000001" y1="508.8000000000001" x2="128.3" y2="508.8000000000001" stroke="#161b22" stroke-width="0.7"/>
<line x1="115.10000000000001" y1="510.60000000000014" x2="128.3" y2="510.60000000000014" stroke="#161b22" stroke-width="0.7"/>
<line x1="115.10000000000001" y1="512.4000000000001" x2="128.3" y2="512.4000000000001" stroke="#161b22" stroke-width="0.7"/>
<line x1="115.10000000000001" y1="514.2" x2="128.3" y2="514.2" stroke="#161b22" stroke-width="0.7"/>
<line x1="115.10000000000001" y1="516.0" x2="128.3" y2="516.0" stroke="#161b22" stroke-width="0.7"/>
<line x1="115.10000000000001" y1="517.8" x2="128.3" y2="517.8" stroke="#161b22" stroke-width="0.7"/>
<line x1="115.10000000000001" y1="519.5999999999999" x2="128.3" y2="519.5999999999999" stroke="#161b22" stroke-width="0.7"/>
<line x1="115.10000000000001" y1="521.3999999999999" x2="128.3" y2="521.3999999999999" stroke="#161b22" stroke-width="0.7"/>
<line x1="115.10000000000001" y1="523.1999999999998" x2="128.3" y2="523.1999999999998" stroke="#161b22" stroke-width="0.7"/>
<line x1="115.10000000000001" y1="524.9999999999998" x2="128.3" y2="524.9999999999998" stroke="#161b22" stroke-width="0.7"/>
<line x1="115.10000000000001" y1="526.7999999999997" x2="128.3" y2="526.7999999999997" stroke="#161b22" stroke-width="0.7"/>
<line x1="115.10000000000001" y1="528.5999999999997" x2="128.3" y2="528.5999999999997" stroke="#161b22" stroke-width="0.7"/>
<line x1="115.10000000000001" y1="530.3999999999996" x2="128.3" y2="530.3999999999996" stroke="#161b22" stroke-width="0.7"/>
<line x1="115.10000000000001" y1="532.1999999999996" x2="128.3" y2="532.1999999999996" stroke="#161b22" stroke-width="0.7"/>
<line x1="115.10000000000001" y1="533.9999999999995" x2="128.3" y2="533.9999999999995" stroke="#161b22" stroke-width="0.7"/>
<line x1="115.10000000000001" y1="535.7999999999995" x2="128.3" y2="535.7999999999995" stroke="#161b22" stroke-width="0.7"/>
<line x1="115.10000000000001" y1="537.5999999999995" x2="128.3" y2="537.5999999999995" stroke="#161b22" stroke-width="0.7"/>
<line x1="115.10000000000001" y1="539.3999999999994" x2="128.3" y2="539.3999999999994" stroke="#161b22" stroke-width="0.7"/>
<line x1="115.10000000000001" y1="541.1999999999994" x2="128.3" y2="541.1999999999994" stroke="#161b22" stroke-width="0.7"/>
<line x1="115.10000000000001" y1="542.9999999999993" x2="128.3" y2="542.9999999999993" stroke="#161b22" stroke-width="0.7"/>
<rect x="114.60" y="511.80" width="14.20" height="13.60" fill="#11151a" />
<rect x="115.30" y="513.20" width="12.80" height="10.80" fill="#2e353d" />
<rect x="141.30" y="489.50" width="16.60" height="57.20" fill="#11151a" />
<rect x="143.00" y="491.20" width="13.20" height="53.80" fill="#1c222a" />
<line x1="143.0" y1="492.6" x2="156.20000000000002" y2="492.6" stroke="#161b22" stroke-width="0.7"/>
<line x1="143.0" y1="494.40000000000003" x2="156.20000000000002" y2="494.40000000000003" stroke="#161b22" stroke-width="0.7"/>
<line x1="143.0" y1="496.20000000000005" x2="156.20000000000002" y2="496.20000000000005" stroke="#161b22" stroke-width="0.7"/>
<line x1="143.0" y1="498.00000000000006" x2="156.20000000000002" y2="498.00000000000006" stroke="#161b22" stroke-width="0.7"/>
<line x1="143.0" y1="499.80000000000007" x2="156.20000000000002" y2="499.80000000000007" stroke="#161b22" stroke-width="0.7"/>
<line x1="143.0" y1="501.6000000000001" x2="156.20000000000002" y2="501.6000000000001" stroke="#161b22" stroke-width="0.7"/>
<line x1="143.0" y1="503.4000000000001" x2="156.20000000000002" y2="503.4000000000001" stroke="#161b22" stroke-width="0.7"/>
<line x1="143.0" y1="505.2000000000001" x2="156.20000000000002" y2="505.2000000000001" stroke="#161b22" stroke-width="0.7"/>
<line x1="143.0" y1="507.0000000000001" x2="156.20000000000002" y2="507.0000000000001" stroke="#161b22" stroke-width="0.7"/>
<line x1="143.0" y1="508.8000000000001" x2="156.20000000000002" y2="508.8000000000001" stroke="#161b22" stroke-width="0.7"/>
<line x1="143.0" y1="510.60000000000014" x2="156.20000000000002" y2="510.60000000000014" stroke="#161b22" stroke-width="0.7"/>
<line x1="143.0" y1="512.4000000000001" x2="156.20000000000002" y2="512.4000000000001" stroke="#161b22" stroke-width="0.7"/>
<line x1="143.0" y1="514.2" x2="156.20000000000002" y2="514.2" stroke="#161b22" stroke-width="0.7"/>
<line x1="143.0" y1="516.0" x2="156.20000000000002" y2="516.0" stroke="#161b22" stroke-width="0.7"/>
<line x1="143.0" y1="517.8" x2="156.20000000000002" y2="517.8" stroke="#161b22" stroke-width="0.7"/>
<line x1="143.0" y1="519.5999999999999" x2="156.20000000000002" y2="519.5999999999999" stroke="#161b22" stroke-width="0.7"/>
<line x1="143.0" y1="521.3999999999999" x2="156.20000000000002" y2="521.3999999999999" stroke="#161b22" stroke-width="0.7"/>
<line x1="143.0" y1="523.1999999999998" x2="156.20000000000002" y2="523.1999999999998" stroke="#161b22" stroke-width="0.7"/>
<line x1="143.0" y1="524.9999999999998" x2="156.20000000000002" y2="524.9999999999998" stroke="#161b22" stroke-width="0.7"/>
<line x1="143.0" y1="526.7999999999997" x2="156.20000000000002" y2="526.7999999999997" stroke="#161b22" stroke-width="0.7"/>
<line x1="143.0" y1="528.5999999999997" x2="156.20000000000002" y2="528.5999999999997" stroke="#161b22" stroke-width="0.7"/>
<line x1="143.0" y1="530.3999999999996" x2="156.20000000000002" y2="530.3999999999996" stroke="#161b22" stroke-width="0.7"/>
<line x1="143.0" y1="532.1999999999996" x2="156.20000000000002" y2="532.1999999999996" stroke="#161b22" stroke-width="0.7"/>
<line x1="143.0" y1="533.9999999999995" x2="156.20000000000002" y2="533.9999999999995" stroke="#161b22" stroke-width="0.7"/>
<line x1="143.0" y1="535.7999999999995" x2="156.20000000000002" y2="535.7999999999995" stroke="#161b22" stroke-width="0.7"/>
<line x1="143.0" y1="537.5999999999995" x2="156.20000000000002" y2="537.5999999999995" stroke="#161b22" stroke-width="0.7"/>
<line x1="143.0" y1="539.3999999999994" x2="156.20000000000002" y2="539.3999999999994" stroke="#161b22" stroke-width="0.7"/>
<line x1="143.0" y1="541.1999999999994" x2="156.20000000000002" y2="541.1999999999994" stroke="#161b22" stroke-width="0.7"/>
<line x1="143.0" y1="542.9999999999993" x2="156.20000000000002" y2="542.9999999999993" stroke="#161b22" stroke-width="0.7"/>
<rect x="142.50" y="532.60" width="14.20" height="13.60" fill="#11151a" />
<rect x="143.20" y="534.00" width="12.80" height="10.80" fill="#2e353d" />
<rect x="173.00" y="470.40" width="655.40" height="89.60" fill="#0d1115" />
<rect x="188.60" y="481.60" width="628.00" height="74.40" fill="#06080a" />
<rect x="190.20" y="482.60" width="16.88" height="72.40" fill="#3b424c" />
<rect x="208.08" y="482.60" width="16.88" height="72.40" fill="#3b424c" />
<rect x="225.97" y="482.60" width="16.88" height="72.40" fill="#3b424c" />
<rect x="243.85" y="482.60" width="16.88" height="72.40" fill="#3b424c" />
<rect x="261.73" y="482.60" width="16.88" height="72.40" fill="#3b424c" />
<rect x="279.61" y="482.60" width="16.88" height="72.40" fill="#3b424c" />
<rect x="297.50" y="482.60" width="16.88" height="72.40" fill="#3b424c" />
<rect x="315.38" y="482.60" width="16.88" height="72.40" fill="#3b424c" />
<rect x="333.26" y="482.60" width="16.88" height="72.40" fill="#3b424c" />
<rect x="351.15" y="482.60" width="16.88" height="72.40" fill="#3b424c" />
<rect x="369.03" y="482.60" width="16.88" height="72.40" fill="#3b424c" />
<rect x="386.91" y="482.60" width="16.88" height="72.40" fill="#3b424c" />
<rect x="404.79" y="482.60" width="16.88" height="72.40" fill="#3b424c" />
<rect x="422.68" y="482.60" width="16.88" height="72.40" fill="#3b424c" />
<rect x="440.56" y="482.60" width="16.88" height="72.40" fill="#3b424c" />
<rect x="458.44" y="482.60" width="16.88" height="72.40" fill="#3b424c" />
<rect x="476.33" y="482.60" width="16.88" height="72.40" fill="#3b424c" />
<rect x="494.21" y="482.60" width="16.88" height="72.40" fill="#3b424c" />
<rect x="512.09" y="482.60" width="16.88" height="72.40" fill="#3b424c" />
<rect x="529.97" y="482.60" width="16.88" height="72.40" fill="#3b424c" />
<rect x="547.86" y="482.60" width="16.88" height="72.40" fill="#3b424c" />
<rect x="565.74" y="482.60" width="16.88" height="72.40" fill="#3b424c" />
<rect x="583.62" y="482.60" width="16.88" height="72.40" fill="#3b424c" />
<rect x="601.51" y="482.60" width="16.88" height="72.40" fill="#3b424c" />
<rect x="619.39" y="482.60" width="16.88" height="72.40" fill="#3b424c" />
<rect x="637.27" y="482.60" width="16.88" height="72.40" fill="#3b424c" />
<rect x="655.15" y="482.60" width="16.88" height="72.40" fill="#3b424c" />
<rect x="673.04" y="482.60" width="16.88" height="72.40" fill="#3b424c" />
<rect x="690.92" y="482.60" width="16.88" height="72.40" fill="#3b424c" />
<rect x="708.80" y="482.60" width="16.88" height="72.40" fill="#3b424c" />
<rect x="726.69" y="482.60" width="16.88" height="72.40" fill="#3b424c" />
<rect x="744.57" y="482.60" width="16.88" height="72.40" fill="#3b424c" />
<rect x="762.45" y="482.60" width="16.88" height="72.40" fill="#3b424c" />
<rect x="780.33" y="482.60" width="16.88" height="72.40" fill="#3b424c" />
<rect x="798.22" y="482.60" width="16.88" height="72.40" fill="#3b424c" />
<rect x="200.98" y="482.20" width="9.80" height="48.70" fill="#0c0f13" />
<rect x="222.47" y="482.20" width="9.80" height="48.70" fill="#0c0f13" />
<rect x="254.23" y="482.20" width="9.80" height="48.70" fill="#0c0f13" />
<rect x="273.71" y="482.20" width="9.80" height="48.70" fill="#0c0f13" />
<rect x="294.40" y="482.20" width="9.80" height="48.70" fill="#0c0f13" />
<rect x="326.16" y="482.20" width="9.80" height="48.70" fill="#0c0f13" />
<rect x="347.65" y="482.20" width="9.80" height="48.70" fill="#0c0f13" />
<rect x="379.41" y="482.20" width="9.80" height="48.70" fill="#0c0f13" />
<rect x="398.89" y="482.20" width="9.80" height="48.70" fill="#0c0f13" />
<rect x="419.58" y="482.20" width="9.80" height="48.70" fill="#0c0f13" />
<rect x="451.34" y="482.20" width="9.80" height="48.70" fill="#0c0f13" />
<rect x="472.83" y="482.20" width="9.80" height="48.70" fill="#0c0f13" />
<rect x="504.59" y="482.20" width="9.80" height="48.70" fill="#0c0f13" />
<rect x="524.07" y="482.20" width="9.80" height="48.70" fill="#0c0f13" />
<rect x="544.76" y="482.20" width="9.80" height="48.70" fill="#0c0f13" />
<rect x="576.52" y="482.20" width="9.80" height="48.70" fill="#0c0f13" />
<rect x="598.01" y="482.20" width="9.80" height="48.70" fill="#0c0f13" />
<rect x="629.77" y="482.20" width="9.80" height="48.70" fill="#0c0f13" />
<rect x="649.25" y="482.20" width="9.80" height="48.70" fill="#0c0f13" />
<rect x="669.94" y="482.20" width="9.80" height="48.70" fill="#0c0f13" />
<rect x="701.70" y="482.20" width="9.80" height="48.70" fill="#0c0f13" />
<rect x="723.19" y="482.20" width="9.80" height="48.70" fill="#0c0f13" />
<rect x="754.95" y="482.20" width="9.80" height="48.70" fill="#0c0f13" />
<rect x="774.43" y="482.20" width="9.80" height="48.70" fill="#0c0f13" />
<rect x="795.12" y="482.20" width="9.80" height="48.70" fill="#0c0f13" />
<path d="M830.2,470.4H974.6V557.8a2.2,2.2 0 0 1 -2.2,2.2H830.2Z" fill="#1c222a"/>
<circle cx="846.5" cy="487.4" r="2.3" fill="#0e1216"/>
<text x="857.40" y="490.60" font-size="8.1" fill="#a4a9b0" text-anchor="start" font-weight="normal" stroke="#a4a9b0" stroke-width="0.33" letter-spacing="0.15">ALWAYS</text>
<circle cx="905.5" cy="487.4" r="2.3" fill="#0e1216"/>
<text x="915.50" y="490.60" font-size="8.1" fill="#a4a9b0" text-anchor="start" font-weight="normal" stroke="#a4a9b0" stroke-width="0.33" letter-spacing="0.15">SCALED</text>
<circle cx="865.8" cy="500.20" r="1.05" fill="#525860"/>
<path d="M856.96,529.91A14.042168674698795,14.042168674698795 0 1 1 874.64,529.91" fill="none" stroke="#525860" stroke-width="1.69"/>
<circle cx="865.8" cy="519" r="11.81" fill="#1b2028" stroke="#000" stroke-width="2.94"/>
<line x1="862.65" y1="522.15" x2="858.61" y2="526.19" stroke="#b4b8be" stroke-width="2.5"/>
<circle cx="857.29" cy="527.51" r="1.4" fill="#f01418"/>
<text x="865.80" y="547.05" font-size="8.25" fill="#a4a9b0" text-anchor="middle" font-weight="normal" stroke="#a4a9b0" stroke-width="0.33" >PORTA</text>
<text x="924.60" y="547.05" font-size="8.25" fill="#a4a9b0" text-anchor="middle" font-weight="normal" stroke="#a4a9b0" stroke-width="0.33" >CURVE</text>
<rect x="910.80" y="504.20" width="28.00" height="27.40" fill="#0e1217" />
<line x1="913" y1="529.4" x2="936.6" y2="506.6" stroke="#7c828a" stroke-width="1.3"/>
<circle cx="971.4" cy="553.4" r="0.95" fill="#07090c"/>
<circle cx="971.4" cy="557.2" r="0.95" fill="#07090c"/>
<circle cx="967.4" cy="557.2" r="0.95" fill="#07090c"/>
<rect x="0.00" y="0.00" width="1065.00" height="31.00" fill="#1fee83" />
<path d="M630.6,213.6L461,187.8M630.6,213.6L701,189.6" fill="none" stroke="#22ee0a" stroke-width="2.4" stroke-linejoin="round"/>
<path d="M452.9,186.1L465.9,180.7L464.2,193.6Z" fill="#22ee0a"/>
<path d="M711,185.6L697.8,183.8L702.2,195.3Z" fill="#22ee0a"/>
</svg>
<div style="position:absolute;left:0;top:0;width:1065px;height:644px;will-change:transform">
<div class="menu" style="left:435.2px;top:389.8px;width:166px;height:149px"></div>
<div class="hl" style="left:440px;top:392.8px;width:160px;height:16.2px"></div>
<div class="mi" style="left:467.3px;top:393.0px">Basic</div>
<svg class="ar" style="left:585px;top:396.0px" width="10" height="10"><path d="M3,1.4L7,5L3,8.6" fill="none" stroke="#333" stroke-width="1.1"/></svg>
<div class="mi" style="left:467.3px;top:411.7px">Misc</div>
<svg class="ar" style="left:585px;top:414.7px" width="10" height="10"><path d="M3,1.4L7,5L3,8.6" fill="none" stroke="#333" stroke-width="1.1"/></svg>
<div class="mi" style="left:467.3px;top:430.4px">Sidechain</div>
<svg class="ar" style="left:585px;top:433.4px" width="10" height="10"><path d="M3,1.4L7,5L3,8.6" fill="none" stroke="#333" stroke-width="1.1"/></svg>
<div class="mi" style="left:467.3px;top:448.8px">User</div>
<svg class="ar" style="left:585px;top:451.8px" width="10" height="10"><path d="M3,1.4L7,5L3,8.6" fill="none" stroke="#333" stroke-width="1.1"/></svg>
<div class="mi" style="left:467.3px;top:474.4px">Wavetable A to LFO</div>
<div class="mi" style="left:467.3px;top:492.9px">Wavetable B to LFO</div>
<div class="mi" style="left:467.3px;top:519.2px">Save Shape...</div>
<div class="sep" style="left:443px;top:469.4px;width:155px"></div>
<div class="sep" style="left:443px;top:513.6px;width:155px"></div>
<div class="menu" style="left:600px;top:390px;width:159.6px;height:207.7px"></div>
<div class="hl" style="left:606px;top:541px;width:148.8px;height:16.4px;background:#e9e9e9"></div>
<div class="sine" style="left:602.8px;top:535.9px;width:158.3px;height:24.8px"></div>
<div class="mi" style="left:631.8px;top:393.3px">flat 0</div>
<div class="mi" style="left:631.8px;top:411.8px">flat 100</div>
<div class="mi" style="left:631.8px;top:430.3px">flat 25</div>
<div class="mi" style="left:631.8px;top:448.8px">flat 50</div>
<div class="mi" style="left:631.8px;top:467.3px">flat 75</div>
<div class="mi" style="left:631.8px;top:485.9px">saw down curved</div>
<div class="mi" style="left:631.8px;top:504.4px">saw down</div>
<div class="mi" style="left:631.8px;top:522.9px">saw up</div>
<div class="mi" style="left:631.8px;top:541.4px">sine</div>
<div class="mi" style="left:631.8px;top:559.9px">square</div>
<div class="mi" style="left:631.8px;top:578.4px">triangle</div>
</div>
</body></html>
